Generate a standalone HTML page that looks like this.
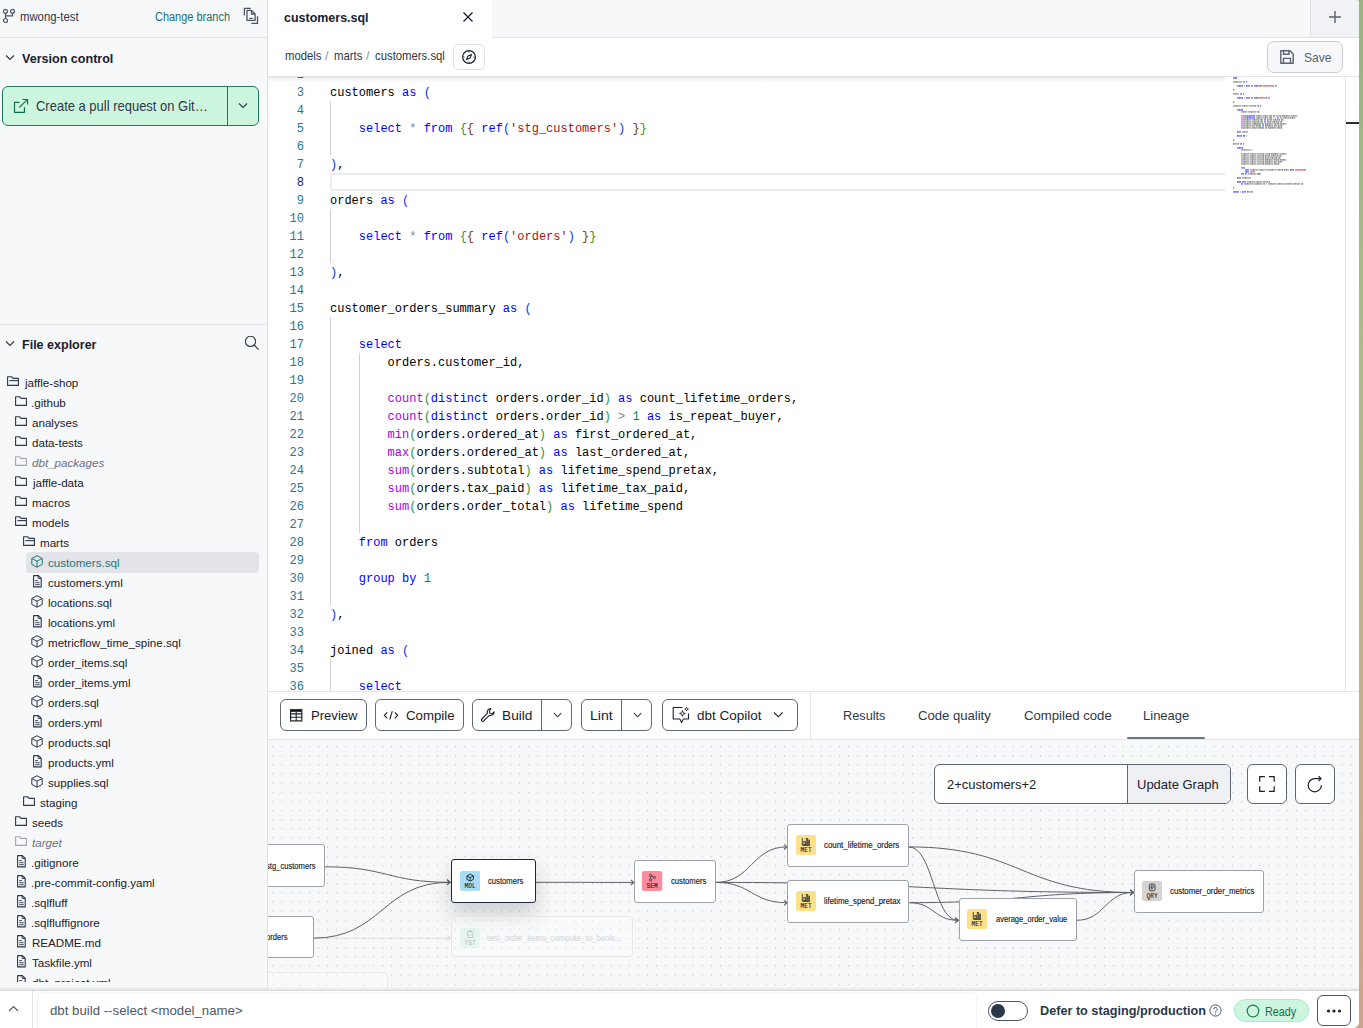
<!DOCTYPE html>
<html><head><meta charset="utf-8"><title>dbt Studio - customers.sql</title>
<style>
html,body{margin:0;padding:0;}
body{width:1363px;height:1028px;overflow:hidden;position:relative;font-family:"Liberation Sans",sans-serif;
 background:linear-gradient(#9bb284,#a9b98c 30%,#c0b090 64%,#caa48e);}
.app{position:absolute;left:0;top:0;width:1359px;height:1028px;background:#fff;overflow:hidden;border-bottom-right-radius:6px;border-top-right-radius:3px;}
.b{position:absolute;}
.t{position:absolute;white-space:nowrap;line-height:1;transform-origin:0 0;}
.code{position:absolute;white-space:pre;font-family:"Liberation Mono",monospace;font-size:12px;line-height:18px;}
</style></head><body><div class="app">
<div class="b" style="left:0px;top:0px;width:267px;height:990px;background:#f7f8fa;"></div><div class="b" style="left:267px;top:0px;width:1px;height:990px;background:#dfe2e7;"></div><svg class="b" style="left:2px;top:8px;" width="14" height="16" viewBox="0 0 14 16" fill="none"><circle cx="3.5" cy="3.35" r="2" stroke="#4a5568" stroke-width="1.2"/><circle cx="10.5" cy="3.35" r="2" stroke="#4a5568" stroke-width="1.2"/><circle cx="3.5" cy="12.5" r="2" stroke="#4a5568" stroke-width="1.2"/><path d="M3.5 5.35V10.5M10.5 5.35V7.9H3.5" stroke="#4a5568" stroke-width="1.2"/></svg><div class="t" style="left:20.40px;top:11.04px;font-size:12px;color:#2d3748;transform:scaleX(0.9444);">mwong-test</div><div class="t" style="left:154.90px;top:11.04px;font-size:12px;color:#17706d;transform:scaleX(0.9142);">Change branch</div><svg class="b" style="left:243px;top:7px;" width="17" height="18" viewBox="0 0 17 18" fill="none"><path d="M1.4 8.6V1.4H7.7M14.5 9.3v7.1H8.4" stroke="#4a5568" stroke-width="1.3"/><path d="M4 3.4h4.5l3.6 3.6v6.4H4z" stroke="#4a5568" stroke-width="1.3" stroke-linejoin="round"/><path d="M8.5 3.4v3.6h3.6M6.3 11.3h3.4" stroke="#4a5568" stroke-width="1.3"/></svg><div class="b" style="left:0px;top:37px;width:267px;height:1px;background:#dfe2e7;"></div><svg class="b" style="left:5px;top:54px;" width="10" height="8" viewBox="0 0 10 8" fill="none"><path d="M1 1.5l4 4 4-4" stroke="#2d3748" stroke-width="1.1"/></svg><div class="t" style="left:21.80px;top:51.94px;font-size:13.3px;color:#1a202c;font-weight:bold;transform:scaleX(0.9438);">Version control</div><div class="b" style="left:2px;top:86px;width:257px;height:40px;background:#cdf6df;border:1px solid #1d7a5c;border-radius:6px;box-sizing:border-box;"></div><div class="b" style="left:227px;top:86px;width:1px;height:40px;background:#1d7a5c;"></div><svg class="b" style="left:12px;top:97px;" width="18" height="17" viewBox="0 0 18 17" fill="none"><path d="M7.4 5.4H2.5V15.3H12.5V10.2" stroke="#0f6e4c" stroke-width="1.2" stroke-linejoin="round"/><path d="M7.3 10.4L15.3 2.6M10.3 2.5H15.5V7.4" stroke="#0f6e4c" stroke-width="1.2"/></svg><div class="t" style="left:36.00px;top:98.71px;font-size:14.4px;color:#2d3748;transform:scaleX(0.9017);">Create a pull request on Git…</div><svg class="b" style="left:238px;top:102px;" width="11" height="8" viewBox="0 0 11 8" fill="none"><path d="M1 1.5l4 4 4-4" stroke="#2d3748" stroke-width="1.1"/></svg><div class="b" style="left:0px;top:324px;width:267px;height:1px;background:#dfe2e7;"></div><svg class="b" style="left:5px;top:340px;" width="10" height="8" viewBox="0 0 10 8" fill="none"><path d="M1 1.5l4 4 4-4" stroke="#2d3748" stroke-width="1.1"/></svg><div class="t" style="left:22.40px;top:337.74px;font-size:13.3px;color:#1a202c;font-weight:bold;transform:scaleX(0.9417);">File explorer</div><svg class="b" style="left:243px;top:336px;" width="17" height="15" viewBox="0 0 17 15" fill="none"><circle cx="7.5" cy="5.4" r="5.1" stroke="#2d3748" stroke-width="1.1"/><path d="M11.1 9L15.6 13.6" stroke="#2d3748" stroke-width="1.1"/></svg><div class="b" style="left:0;top:0;width:267px;height:982px;overflow:hidden;"><svg class="b" style="left:7px;top:375.7px;" width="13" height="11" viewBox="0 0 13 11" fill="none"><path d="M0.6 9.4V0.8h4.2l1.2 1.6h5.4v7z" stroke="#2d3748" stroke-width="1.1" stroke-linejoin="round"/><path d="M2.4 4.6h9.4" stroke="#2d3748" stroke-width="1.1"/></svg><div class="t" style="left:25.00px;top:376.88px;font-size:11.6px;color:#1a202c;">jaffle-shop</div><svg class="b" style="left:15px;top:395.7px;" width="13" height="11" viewBox="0 0 13 11" fill="none"><path d="M0.6 9.4V0.8h4.2l1.2 1.6h5.4v7z" stroke="#2d3748" stroke-width="1.1" stroke-linejoin="round"/></svg><div class="t" style="left:31.00px;top:396.88px;font-size:11.6px;color:#1a202c;">.github</div><svg class="b" style="left:15px;top:415.7px;" width="13" height="11" viewBox="0 0 13 11" fill="none"><path d="M0.6 9.4V0.8h4.2l1.2 1.6h5.4v7z" stroke="#2d3748" stroke-width="1.1" stroke-linejoin="round"/></svg><div class="t" style="left:32.00px;top:416.88px;font-size:11.6px;color:#1a202c;">analyses</div><svg class="b" style="left:15px;top:435.7px;" width="13" height="11" viewBox="0 0 13 11" fill="none"><path d="M0.6 9.4V0.8h4.2l1.2 1.6h5.4v7z" stroke="#2d3748" stroke-width="1.1" stroke-linejoin="round"/></svg><div class="t" style="left:32.00px;top:436.88px;font-size:11.6px;color:#1a202c;">data-tests</div><svg class="b" style="left:15px;top:455.7px;" width="13" height="11" viewBox="0 0 13 11" fill="none"><path d="M0.6 9.4V0.8h4.2l1.2 1.6h5.4v7z" stroke="#a0a7b2" stroke-width="1.1" stroke-linejoin="round"/></svg><div class="t" style="left:32.00px;top:456.88px;font-size:11.6px;color:#6b7280;font-style:italic;">dbt_packages</div><svg class="b" style="left:15px;top:475.7px;" width="13" height="11" viewBox="0 0 13 11" fill="none"><path d="M0.6 9.4V0.8h4.2l1.2 1.6h5.4v7z" stroke="#2d3748" stroke-width="1.1" stroke-linejoin="round"/></svg><div class="t" style="left:33.00px;top:476.88px;font-size:11.6px;color:#1a202c;">jaffle-data</div><svg class="b" style="left:15px;top:495.7px;" width="13" height="11" viewBox="0 0 13 11" fill="none"><path d="M0.6 9.4V0.8h4.2l1.2 1.6h5.4v7z" stroke="#2d3748" stroke-width="1.1" stroke-linejoin="round"/></svg><div class="t" style="left:32.00px;top:496.88px;font-size:11.6px;color:#1a202c;">macros</div><svg class="b" style="left:15px;top:515.7px;" width="13" height="11" viewBox="0 0 13 11" fill="none"><path d="M0.6 9.4V0.8h4.2l1.2 1.6h5.4v7z" stroke="#2d3748" stroke-width="1.1" stroke-linejoin="round"/><path d="M2.4 4.6h9.4" stroke="#2d3748" stroke-width="1.1"/></svg><div class="t" style="left:32.00px;top:516.88px;font-size:11.6px;color:#1a202c;">models</div><svg class="b" style="left:23px;top:535.7px;" width="13" height="11" viewBox="0 0 13 11" fill="none"><path d="M0.6 9.4V0.8h4.2l1.2 1.6h5.4v7z" stroke="#2d3748" stroke-width="1.1" stroke-linejoin="round"/><path d="M2.4 4.6h9.4" stroke="#2d3748" stroke-width="1.1"/></svg><div class="t" style="left:40.00px;top:536.88px;font-size:11.6px;color:#1a202c;">marts</div><div class="b" style="left:26.2px;top:552.0px;width:232.6px;height:20.9px;background:#e2e4e9;border-radius:4px;"></div><svg class="b" style="left:31px;top:554.5px;" width="13" height="13" viewBox="0 0 13 13" fill="none"><path d="M6 0.7l5.2 2.8v5.9L6 12.2 0.8 9.4V3.5z" stroke="#1d7a78" stroke-width="1" stroke-linejoin="round"/><path d="M0.8 3.5L6 6.2l5.2-2.7M6 6.2v6" stroke="#1d7a78" stroke-width="1"/></svg><div class="t" style="left:48.00px;top:556.88px;font-size:11.6px;color:#1d7a78;">customers.sql</div><svg class="b" style="left:32.6px;top:574.8000000000001px;" width="10" height="13" viewBox="0 0 10 13" fill="none"><path d="M0.6 0.6h4.8l2.8 2.9v8.4H0.6z" stroke="#2d3748" stroke-width="1.1" stroke-linejoin="round"/><path d="M5.2 0.6v2.9h3M2.2 5.6h2.8M2.2 7.7h4.6M2.2 9.7h4.6" stroke="#2d3748" stroke-width="0.9"/></svg><div class="t" style="left:48.00px;top:576.88px;font-size:11.6px;color:#1a202c;">customers.yml</div><svg class="b" style="left:31px;top:594.5px;" width="13" height="13" viewBox="0 0 13 13" fill="none"><path d="M6 0.7l5.2 2.8v5.9L6 12.2 0.8 9.4V3.5z" stroke="#2d3748" stroke-width="1" stroke-linejoin="round"/><path d="M0.8 3.5L6 6.2l5.2-2.7M6 6.2v6" stroke="#2d3748" stroke-width="1"/></svg><div class="t" style="left:48.00px;top:596.88px;font-size:11.6px;color:#1a202c;">locations.sql</div><svg class="b" style="left:32.6px;top:614.8000000000001px;" width="10" height="13" viewBox="0 0 10 13" fill="none"><path d="M0.6 0.6h4.8l2.8 2.9v8.4H0.6z" stroke="#2d3748" stroke-width="1.1" stroke-linejoin="round"/><path d="M5.2 0.6v2.9h3M2.2 5.6h2.8M2.2 7.7h4.6M2.2 9.7h4.6" stroke="#2d3748" stroke-width="0.9"/></svg><div class="t" style="left:48.00px;top:616.88px;font-size:11.6px;color:#1a202c;">locations.yml</div><svg class="b" style="left:31px;top:634.5px;" width="13" height="13" viewBox="0 0 13 13" fill="none"><path d="M6 0.7l5.2 2.8v5.9L6 12.2 0.8 9.4V3.5z" stroke="#2d3748" stroke-width="1" stroke-linejoin="round"/><path d="M0.8 3.5L6 6.2l5.2-2.7M6 6.2v6" stroke="#2d3748" stroke-width="1"/></svg><div class="t" style="left:48.00px;top:636.88px;font-size:11.6px;color:#1a202c;">metricflow_time_spine.sql</div><svg class="b" style="left:31px;top:654.5px;" width="13" height="13" viewBox="0 0 13 13" fill="none"><path d="M6 0.7l5.2 2.8v5.9L6 12.2 0.8 9.4V3.5z" stroke="#2d3748" stroke-width="1" stroke-linejoin="round"/><path d="M0.8 3.5L6 6.2l5.2-2.7M6 6.2v6" stroke="#2d3748" stroke-width="1"/></svg><div class="t" style="left:48.00px;top:656.88px;font-size:11.6px;color:#1a202c;">order_items.sql</div><svg class="b" style="left:32.6px;top:674.8000000000001px;" width="10" height="13" viewBox="0 0 10 13" fill="none"><path d="M0.6 0.6h4.8l2.8 2.9v8.4H0.6z" stroke="#2d3748" stroke-width="1.1" stroke-linejoin="round"/><path d="M5.2 0.6v2.9h3M2.2 5.6h2.8M2.2 7.7h4.6M2.2 9.7h4.6" stroke="#2d3748" stroke-width="0.9"/></svg><div class="t" style="left:48.00px;top:676.88px;font-size:11.6px;color:#1a202c;">order_items.yml</div><svg class="b" style="left:31px;top:694.5px;" width="13" height="13" viewBox="0 0 13 13" fill="none"><path d="M6 0.7l5.2 2.8v5.9L6 12.2 0.8 9.4V3.5z" stroke="#2d3748" stroke-width="1" stroke-linejoin="round"/><path d="M0.8 3.5L6 6.2l5.2-2.7M6 6.2v6" stroke="#2d3748" stroke-width="1"/></svg><div class="t" style="left:48.00px;top:696.88px;font-size:11.6px;color:#1a202c;">orders.sql</div><svg class="b" style="left:32.6px;top:714.8000000000001px;" width="10" height="13" viewBox="0 0 10 13" fill="none"><path d="M0.6 0.6h4.8l2.8 2.9v8.4H0.6z" stroke="#2d3748" stroke-width="1.1" stroke-linejoin="round"/><path d="M5.2 0.6v2.9h3M2.2 5.6h2.8M2.2 7.7h4.6M2.2 9.7h4.6" stroke="#2d3748" stroke-width="0.9"/></svg><div class="t" style="left:48.00px;top:716.88px;font-size:11.6px;color:#1a202c;">orders.yml</div><svg class="b" style="left:31px;top:734.5px;" width="13" height="13" viewBox="0 0 13 13" fill="none"><path d="M6 0.7l5.2 2.8v5.9L6 12.2 0.8 9.4V3.5z" stroke="#2d3748" stroke-width="1" stroke-linejoin="round"/><path d="M0.8 3.5L6 6.2l5.2-2.7M6 6.2v6" stroke="#2d3748" stroke-width="1"/></svg><div class="t" style="left:48.00px;top:736.88px;font-size:11.6px;color:#1a202c;">products.sql</div><svg class="b" style="left:32.6px;top:754.8000000000001px;" width="10" height="13" viewBox="0 0 10 13" fill="none"><path d="M0.6 0.6h4.8l2.8 2.9v8.4H0.6z" stroke="#2d3748" stroke-width="1.1" stroke-linejoin="round"/><path d="M5.2 0.6v2.9h3M2.2 5.6h2.8M2.2 7.7h4.6M2.2 9.7h4.6" stroke="#2d3748" stroke-width="0.9"/></svg><div class="t" style="left:48.00px;top:756.88px;font-size:11.6px;color:#1a202c;">products.yml</div><svg class="b" style="left:31px;top:774.5px;" width="13" height="13" viewBox="0 0 13 13" fill="none"><path d="M6 0.7l5.2 2.8v5.9L6 12.2 0.8 9.4V3.5z" stroke="#2d3748" stroke-width="1" stroke-linejoin="round"/><path d="M0.8 3.5L6 6.2l5.2-2.7M6 6.2v6" stroke="#2d3748" stroke-width="1"/></svg><div class="t" style="left:48.00px;top:776.88px;font-size:11.6px;color:#1a202c;">supplies.sql</div><svg class="b" style="left:23px;top:795.7px;" width="13" height="11" viewBox="0 0 13 11" fill="none"><path d="M0.6 9.4V0.8h4.2l1.2 1.6h5.4v7z" stroke="#2d3748" stroke-width="1.1" stroke-linejoin="round"/></svg><div class="t" style="left:40.00px;top:796.88px;font-size:11.6px;color:#1a202c;">staging</div><svg class="b" style="left:15px;top:815.7px;" width="13" height="11" viewBox="0 0 13 11" fill="none"><path d="M0.6 9.4V0.8h4.2l1.2 1.6h5.4v7z" stroke="#2d3748" stroke-width="1.1" stroke-linejoin="round"/></svg><div class="t" style="left:32.00px;top:816.88px;font-size:11.6px;color:#1a202c;">seeds</div><svg class="b" style="left:15px;top:835.7px;" width="13" height="11" viewBox="0 0 13 11" fill="none"><path d="M0.6 9.4V0.8h4.2l1.2 1.6h5.4v7z" stroke="#a0a7b2" stroke-width="1.1" stroke-linejoin="round"/></svg><div class="t" style="left:32.00px;top:836.88px;font-size:11.6px;color:#6b7280;font-style:italic;">target</div><svg class="b" style="left:16.6px;top:854.8000000000001px;" width="10" height="13" viewBox="0 0 10 13" fill="none"><path d="M0.6 0.6h4.8l2.8 2.9v8.4H0.6z" stroke="#2d3748" stroke-width="1.1" stroke-linejoin="round"/><path d="M5.2 0.6v2.9h3M2.2 5.6h2.8M2.2 7.7h4.6M2.2 9.7h4.6" stroke="#2d3748" stroke-width="0.9"/></svg><div class="t" style="left:31.00px;top:856.88px;font-size:11.6px;color:#1a202c;">.gitignore</div><svg class="b" style="left:16.6px;top:874.8000000000001px;" width="10" height="13" viewBox="0 0 10 13" fill="none"><path d="M0.6 0.6h4.8l2.8 2.9v8.4H0.6z" stroke="#2d3748" stroke-width="1.1" stroke-linejoin="round"/><path d="M5.2 0.6v2.9h3M2.2 5.6h2.8M2.2 7.7h4.6M2.2 9.7h4.6" stroke="#2d3748" stroke-width="0.9"/></svg><div class="t" style="left:31.00px;top:876.88px;font-size:11.6px;color:#1a202c;">.pre-commit-config.yaml</div><svg class="b" style="left:16.6px;top:894.8000000000001px;" width="10" height="13" viewBox="0 0 10 13" fill="none"><path d="M0.6 0.6h4.8l2.8 2.9v8.4H0.6z" stroke="#2d3748" stroke-width="1.1" stroke-linejoin="round"/><path d="M5.2 0.6v2.9h3M2.2 5.6h2.8M2.2 7.7h4.6M2.2 9.7h4.6" stroke="#2d3748" stroke-width="0.9"/></svg><div class="t" style="left:31.00px;top:896.88px;font-size:11.6px;color:#1a202c;">.sqlfluff</div><svg class="b" style="left:16.6px;top:914.8000000000001px;" width="10" height="13" viewBox="0 0 10 13" fill="none"><path d="M0.6 0.6h4.8l2.8 2.9v8.4H0.6z" stroke="#2d3748" stroke-width="1.1" stroke-linejoin="round"/><path d="M5.2 0.6v2.9h3M2.2 5.6h2.8M2.2 7.7h4.6M2.2 9.7h4.6" stroke="#2d3748" stroke-width="0.9"/></svg><div class="t" style="left:31.00px;top:916.88px;font-size:11.6px;color:#1a202c;">.sqlfluffignore</div><svg class="b" style="left:16.6px;top:934.8000000000001px;" width="10" height="13" viewBox="0 0 10 13" fill="none"><path d="M0.6 0.6h4.8l2.8 2.9v8.4H0.6z" stroke="#2d3748" stroke-width="1.1" stroke-linejoin="round"/><path d="M5.2 0.6v2.9h3M2.2 5.6h2.8M2.2 7.7h4.6M2.2 9.7h4.6" stroke="#2d3748" stroke-width="0.9"/></svg><div class="t" style="left:32.00px;top:936.88px;font-size:11.6px;color:#1a202c;">README.md</div><svg class="b" style="left:16.6px;top:954.8000000000001px;" width="10" height="13" viewBox="0 0 10 13" fill="none"><path d="M0.6 0.6h4.8l2.8 2.9v8.4H0.6z" stroke="#2d3748" stroke-width="1.1" stroke-linejoin="round"/><path d="M5.2 0.6v2.9h3M2.2 5.6h2.8M2.2 7.7h4.6M2.2 9.7h4.6" stroke="#2d3748" stroke-width="0.9"/></svg><div class="t" style="left:32.00px;top:956.88px;font-size:11.6px;color:#1a202c;">Taskfile.yml</div><svg class="b" style="left:16.6px;top:974.8000000000001px;" width="10" height="13" viewBox="0 0 10 13" fill="none"><path d="M0.6 0.6h4.8l2.8 2.9v8.4H0.6z" stroke="#2d3748" stroke-width="1.1" stroke-linejoin="round"/><path d="M5.2 0.6v2.9h3M2.2 5.6h2.8M2.2 7.7h4.6M2.2 9.7h4.6" stroke="#2d3748" stroke-width="0.9"/></svg><div class="t" style="left:32.00px;top:976.88px;font-size:11.6px;color:#1a202c;">dbt_project.yml</div></div><div class="b" style="left:0px;top:989px;width:1359px;height:39px;background:#fff;"></div><svg class="b" style="left:8px;top:1005px;" width="11" height="8" viewBox="0 0 11 8" fill="none"><path d="M1 6l4.5-4.5L10 6" stroke="#4a5568" stroke-width="1.1"/></svg><div class="b" style="left:32px;top:990px;width:1px;height:38px;background:#e2e5ea;"></div><div class="t" style="left:49.50px;top:1005.16px;font-size:12.8px;color:#4f5968;transform:scaleX(1.0339);">dbt build --select &lt;model_name&gt;</div><div class="b" style="left:36.5px;top:992px;width:940px;height:40px;border:1px solid #f2f3f5;border-radius:5px;box-sizing:border-box;"></div><div class="b" style="left:988px;top:1001px;width:39.5px;height:19.5px;border:1.2px solid #4a5568;border-radius:10px;box-sizing:border-box;background:#fff;"></div><div class="b" style="left:991px;top:1003.7px;width:14px;height:14px;background:#2d3748;border-radius:50%;"></div><div class="t" style="left:1039.90px;top:1004.40px;font-size:13.7px;color:#2d3748;font-weight:bold;transform:scaleX(0.9252);">Defer to staging/production</div><svg class="b" style="left:1209px;top:1004px;" width="13" height="13" viewBox="0 0 13 13" fill="none"><circle cx="6.5" cy="6.5" r="5.6" stroke="#4a5568" stroke-width="1"/><path d="M4.7 5.2a1.8 1.8 0 1 1 2.6 1.6c-.6.3-.8.6-.8 1.2v.4" stroke="#4a5568" stroke-width="1"/><circle cx="6.5" cy="9.9" r=".6" fill="#4a5568"/></svg><div class="b" style="left:1234.3px;top:999.2px;width:74.7px;height:23.1px;background:#ccf6de;border:1px solid #a3ecc4;border-radius:12px;box-sizing:border-box;"></div><svg class="b" style="left:1246px;top:1004px;" width="14" height="14" viewBox="0 0 14 14" fill="none"><circle cx="7" cy="7" r="5.8" stroke="#1d7a5c" stroke-width="1.2"/></svg><div class="t" style="left:1264.77px;top:1004.99px;font-size:13px;color:#1d6b50;transform:scaleX(0.8307);">Ready</div><div class="b" style="left:1317.4px;top:995.4px;width:33.6px;height:31px;border:1.3px solid #4a5568;border-radius:6px;box-sizing:border-box;background:#fff;"></div><svg class="b" style="left:1325px;top:1008px;" width="18" height="6" viewBox="0 0 18 6" fill="none"><circle cx="3.5" cy="3" r="1.6" fill="#1a202c"/><circle cx="9" cy="3" r="1.6" fill="#1a202c"/><circle cx="14.5" cy="3" r="1.6" fill="#1a202c"/></svg><div class="b" style="left:268px;top:0px;width:1091px;height:37px;background:#f7f8fa;"></div><div class="b" style="left:268px;top:37px;width:1091px;height:1px;background:#dfe2e7;"></div><div class="b" style="left:1310px;top:0px;width:49px;height:37px;background:#f1f2f5;border-left:1px solid #dfe2e7;"></div><svg class="b" style="left:1328px;top:10px;" width="14" height="14" viewBox="0 0 14 14" fill="none"><path d="M7 1v12M1 7h12" stroke="#5a6270" stroke-width="1.4"/></svg><div class="b" style="left:268px;top:0px;width:224px;height:38px;background:#fff;"></div><div class="t" style="left:284.20px;top:10.74px;font-size:13.3px;color:#1a202c;font-weight:bold;transform:scaleX(0.9378);">customers.sql</div><svg class="b" style="left:462px;top:11px;" width="12" height="12" viewBox="0 0 12 12" fill="none"><path d="M1.5 1.5l9 9M10.5 1.5l-9 9" stroke="#1a202c" stroke-width="1.3"/></svg><div class="b" style="left:268px;top:38px;width:1091px;height:38px;background:#fff;"></div><div class="b" style="left:268px;top:76px;width:1091px;height:1px;background:#e2e5ea;"></div><div class="t" style="left:284.50px;top:49.50px;font-size:12.4px;color:#2d3748;transform:scaleX(0.9107);">models</div><div class="t" style="left:324.90px;top:50.30px;font-size:12.4px;color:#8a94a3;">/</div><div class="t" style="left:333.80px;top:49.50px;font-size:12.4px;color:#2d3748;transform:scaleX(0.9161);">marts</div><div class="t" style="left:366.00px;top:50.30px;font-size:12.4px;color:#8a94a3;">/</div><div class="t" style="left:375.10px;top:49.50px;font-size:12.4px;color:#2d3748;transform:scaleX(0.9144);">customers.sql</div><div class="b" style="left:453.2px;top:44.3px;width:31.5px;height:25.4px;border:1px solid #dfe2e7;border-radius:5px;box-sizing:border-box;background:#fff;"></div><svg class="b" style="left:461px;top:49px;" width="16" height="16" viewBox="0 0 16 16" fill="none"><circle cx="8" cy="8" r="6.4" stroke="#1a202c" stroke-width="1.2"/><path d="M8 2v1.6M8 12.4V14M2 8h1.6M12.4 8H14" stroke="#1a202c" stroke-width="1" opacity="0.7"/><path d="M10.6 5.4L9 9 5.4 10.6 7 7z" stroke="#1a202c" stroke-width="1.1" stroke-linejoin="round"/></svg><div class="b" style="left:1267.2px;top:41.1px;width:75.6px;height:31.8px;background:#f7f8fa;border:1px solid #c9ced6;border-radius:7px;box-sizing:border-box;"></div><svg class="b" style="left:1279px;top:49px;" width="16" height="16" viewBox="0 0 16 16" fill="none"><path d="M1.8 1.8h9.2l3.2 3.2v9.2H1.8z" stroke="#5a6270" stroke-width="1.4" stroke-linejoin="round"/><path d="M4.5 1.8v3.4h5.5V1.8M4.5 14.2V9.4h7v4.8" stroke="#5a6270" stroke-width="1.4"/></svg><div class="t" style="left:1303.50px;top:50.75px;font-size:13.4px;color:#5a6270;transform:scaleX(0.9044);">Save</div><div class="b" style="left:268px;top:77px;width:1091px;height:614px;overflow:hidden;"><div class="b" style="left:-268px;top:-77px;width:1359px;height:700px;"><div class="b" style="left:330.3px;top:173.3px;width:930px;height:17.8px;border:2px solid #ececec;box-sizing:border-box;"></div><div class="b" style="left:1225px;top:77px;width:120px;height:620px;background:#fff;"></div><div class="b" style="left:330.0px;top:101.1px;width:1px;height:54.0px;background:#d3d3d3;"></div><div class="b" style="left:330.0px;top:209.1px;width:1px;height:54.00000000000003px;background:#d3d3d3;"></div><div class="b" style="left:330.0px;top:317.1px;width:1px;height:288.0px;background:#d3d3d3;"></div><div class="b" style="left:358.8px;top:353.1px;width:1px;height:180.0px;background:#d3d3d3;"></div><div class="b" style="left:330.0px;top:659.1px;width:1px;height:54.0px;background:#d3d3d3;"></div><div class="code" style="left:262px;top:48.10px;width:42px;text-align:right;"><span style="color:#237893">1</span><br><span style="color:#237893">2</span><br><span style="color:#237893">3</span><br><span style="color:#237893">4</span><br><span style="color:#237893">5</span><br><span style="color:#237893">6</span><br><span style="color:#237893">7</span><br><span style="color:#0b216f">8</span><br><span style="color:#237893">9</span><br><span style="color:#237893">10</span><br><span style="color:#237893">11</span><br><span style="color:#237893">12</span><br><span style="color:#237893">13</span><br><span style="color:#237893">14</span><br><span style="color:#237893">15</span><br><span style="color:#237893">16</span><br><span style="color:#237893">17</span><br><span style="color:#237893">18</span><br><span style="color:#237893">19</span><br><span style="color:#237893">20</span><br><span style="color:#237893">21</span><br><span style="color:#237893">22</span><br><span style="color:#237893">23</span><br><span style="color:#237893">24</span><br><span style="color:#237893">25</span><br><span style="color:#237893">26</span><br><span style="color:#237893">27</span><br><span style="color:#237893">28</span><br><span style="color:#237893">29</span><br><span style="color:#237893">30</span><br><span style="color:#237893">31</span><br><span style="color:#237893">32</span><br><span style="color:#237893">33</span><br><span style="color:#237893">34</span><br><span style="color:#237893">35</span><br><span style="color:#237893">36</span><br><span style="color:#237893">37</span></div><div class="code" style="left:330px;top:48.10px;"><span style="color:#0000ff">with</span>

<span style="color:#000000">customers</span> <span style="color:#0000ff">as</span> <span style="color:#0431fa">(</span>

    <span style="color:#0000ff">select</span> <span style="color:#778899">*</span> <span style="color:#0000ff">from</span> <span style="color:#319331">{</span><span style="color:#7b3814">{</span> <span style="color:#0000ff">ref</span><span style="color:#0431fa">(</span><span style="color:#a31515">'stg_customers'</span><span style="color:#0431fa">)</span> <span style="color:#7b3814">}</span><span style="color:#319331">}</span>

<span style="color:#0431fa">)</span><span style="color:#000000">,</span>

<span style="color:#000000">orders</span> <span style="color:#0000ff">as</span> <span style="color:#0431fa">(</span>

    <span style="color:#0000ff">select</span> <span style="color:#778899">*</span> <span style="color:#0000ff">from</span> <span style="color:#319331">{</span><span style="color:#7b3814">{</span> <span style="color:#0000ff">ref</span><span style="color:#0431fa">(</span><span style="color:#a31515">'orders'</span><span style="color:#0431fa">)</span> <span style="color:#7b3814">}</span><span style="color:#319331">}</span>

<span style="color:#0431fa">)</span><span style="color:#000000">,</span>

<span style="color:#000000">customer_orders_summary</span> <span style="color:#0000ff">as</span> <span style="color:#0431fa">(</span>

    <span style="color:#0000ff">select</span>
        <span style="color:#000000">orders</span><span style="color:#000000">.</span><span style="color:#000000">customer_id</span><span style="color:#000000">,</span>

        <span style="color:#af00db">count</span><span style="color:#319331">(</span><span style="color:#0000ff">distinct</span> <span style="color:#000000">orders</span><span style="color:#000000">.</span><span style="color:#000000">order_id</span><span style="color:#319331">)</span> <span style="color:#0000ff">as</span> <span style="color:#000000">count_lifetime_orders</span><span style="color:#000000">,</span>
        <span style="color:#af00db">count</span><span style="color:#319331">(</span><span style="color:#0000ff">distinct</span> <span style="color:#000000">orders</span><span style="color:#000000">.</span><span style="color:#000000">order_id</span><span style="color:#319331">)</span> <span style="color:#778899">&gt;</span> <span style="color:#098658">1</span> <span style="color:#0000ff">as</span> <span style="color:#000000">is_repeat_buyer</span><span style="color:#000000">,</span>
        <span style="color:#af00db">min</span><span style="color:#319331">(</span><span style="color:#000000">orders</span><span style="color:#000000">.</span><span style="color:#000000">ordered_at</span><span style="color:#319331">)</span> <span style="color:#0000ff">as</span> <span style="color:#000000">first_ordered_at</span><span style="color:#000000">,</span>
        <span style="color:#af00db">max</span><span style="color:#319331">(</span><span style="color:#000000">orders</span><span style="color:#000000">.</span><span style="color:#000000">ordered_at</span><span style="color:#319331">)</span> <span style="color:#0000ff">as</span> <span style="color:#000000">last_ordered_at</span><span style="color:#000000">,</span>
        <span style="color:#af00db">sum</span><span style="color:#319331">(</span><span style="color:#000000">orders</span><span style="color:#000000">.</span><span style="color:#000000">subtotal</span><span style="color:#319331">)</span> <span style="color:#0000ff">as</span> <span style="color:#000000">lifetime_spend_pretax</span><span style="color:#000000">,</span>
        <span style="color:#af00db">sum</span><span style="color:#319331">(</span><span style="color:#000000">orders</span><span style="color:#000000">.</span><span style="color:#000000">tax_paid</span><span style="color:#319331">)</span> <span style="color:#0000ff">as</span> <span style="color:#000000">lifetime_tax_paid</span><span style="color:#000000">,</span>
        <span style="color:#af00db">sum</span><span style="color:#319331">(</span><span style="color:#000000">orders</span><span style="color:#000000">.</span><span style="color:#000000">order_total</span><span style="color:#319331">)</span> <span style="color:#0000ff">as</span> <span style="color:#000000">lifetime_spend</span>

    <span style="color:#0000ff">from</span> <span style="color:#000000">orders</span>

    <span style="color:#0000ff">group</span> <span style="color:#0000ff">by</span> <span style="color:#098658">1</span>

<span style="color:#0431fa">)</span><span style="color:#000000">,</span>

<span style="color:#000000">joined</span> <span style="color:#0000ff">as</span> <span style="color:#0431fa">(</span>

    <span style="color:#0000ff">select</span>
        <span style="color:#000000">customers</span><span style="color:#000000">.</span><span style="color:#778899">*</span><span style="color:#000000">,</span></div></div></div><div class="b" style="left:268px;top:77px;width:957px;height:5px;background:linear-gradient(rgba(0,0,0,0.09),rgba(0,0,0,0));"></div><svg class="b" style="left:1233px;top:76.7px;" width="110" height="120" viewBox="0 0 110 120" fill="none"><rect x="0" y="0.2" width="1" height="1.4" fill="#0000ff" opacity="0.55"/><rect x="1" y="0.2" width="1" height="1.4" fill="#0000ff" opacity="0.55"/><rect x="2" y="0.2" width="1" height="1.4" fill="#0000ff" opacity="0.7"/><rect x="3" y="0.2" width="1" height="1.4" fill="#0000ff" opacity="0.7"/><rect x="0" y="4.2" width="1" height="1.4" fill="#222" opacity="0.42"/><rect x="1" y="4.2" width="1" height="1.4" fill="#222" opacity="0.42"/><rect x="2" y="4.2" width="1" height="1.4" fill="#222" opacity="0.42"/><rect x="3" y="4.2" width="1" height="1.4" fill="#222" opacity="0.62"/><rect x="4" y="4.2" width="1" height="1.4" fill="#222" opacity="0.42"/><rect x="5" y="4.2" width="1" height="1.4" fill="#222" opacity="0.42"/><rect x="6" y="4.2" width="1" height="1.4" fill="#222" opacity="0.42"/><rect x="7" y="4.2" width="1" height="1.4" fill="#222" opacity="0.42"/><rect x="8" y="4.2" width="1" height="1.4" fill="#222" opacity="0.42"/><rect x="10" y="4.2" width="1" height="1.4" fill="#0000ff" opacity="0.55"/><rect x="11" y="4.2" width="1" height="1.4" fill="#0000ff" opacity="0.55"/><rect x="13" y="4.2" width="1" height="1.4" fill="#0431fa" opacity="0.7"/><rect x="4" y="8.2" width="1" height="1.4" fill="#0000ff" opacity="0.55"/><rect x="5" y="8.2" width="1" height="1.4" fill="#0000ff" opacity="0.55"/><rect x="6" y="8.2" width="1" height="1.4" fill="#0000ff" opacity="0.7"/><rect x="7" y="8.2" width="1" height="1.4" fill="#0000ff" opacity="0.55"/><rect x="8" y="8.2" width="1" height="1.4" fill="#0000ff" opacity="0.55"/><rect x="9" y="8.2" width="1" height="1.4" fill="#0000ff" opacity="0.7"/><rect x="11" y="8.2" width="1" height="1.4" fill="#778899" opacity="0.55"/><rect x="13" y="8.2" width="1" height="1.4" fill="#0000ff" opacity="0.7"/><rect x="14" y="8.2" width="1" height="1.4" fill="#0000ff" opacity="0.55"/><rect x="15" y="8.2" width="1" height="1.4" fill="#0000ff" opacity="0.55"/><rect x="16" y="8.2" width="1" height="1.4" fill="#0000ff" opacity="0.55"/><rect x="18" y="8.2" width="1" height="1.4" fill="#319331" opacity="0.7"/><rect x="19" y="8.2" width="1" height="1.4" fill="#7b3814" opacity="0.7"/><rect x="21" y="8.2" width="1" height="1.4" fill="#0000ff" opacity="0.55"/><rect x="22" y="8.2" width="1" height="1.4" fill="#0000ff" opacity="0.55"/><rect x="23" y="8.2" width="1" height="1.4" fill="#0000ff" opacity="0.7"/><rect x="24" y="8.2" width="1" height="1.4" fill="#0431fa" opacity="0.7"/><rect x="25" y="8.2" width="1" height="1.4" fill="#a31515" opacity="0.55"/><rect x="26" y="8.2" width="1" height="1.4" fill="#a31515" opacity="0.55"/><rect x="27" y="8.2" width="1" height="1.4" fill="#a31515" opacity="0.7"/><rect x="28" y="8.2" width="1" height="1.4" fill="#a31515" opacity="0.7"/><rect x="29" y="8.2" width="1" height="1.4" fill="#a31515" opacity="0.2"/><rect x="30" y="8.2" width="1" height="1.4" fill="#a31515" opacity="0.55"/><rect x="31" y="8.2" width="1" height="1.4" fill="#a31515" opacity="0.55"/><rect x="32" y="8.2" width="1" height="1.4" fill="#a31515" opacity="0.55"/><rect x="33" y="8.2" width="1" height="1.4" fill="#a31515" opacity="0.7"/><rect x="34" y="8.2" width="1" height="1.4" fill="#a31515" opacity="0.55"/><rect x="35" y="8.2" width="1" height="1.4" fill="#a31515" opacity="0.55"/><rect x="36" y="8.2" width="1" height="1.4" fill="#a31515" opacity="0.55"/><rect x="37" y="8.2" width="1" height="1.4" fill="#a31515" opacity="0.55"/><rect x="38" y="8.2" width="1" height="1.4" fill="#a31515" opacity="0.55"/><rect x="39" y="8.2" width="1" height="1.4" fill="#a31515" opacity="0.55"/><rect x="40" y="8.2" width="1" height="1.4" fill="#0431fa" opacity="0.7"/><rect x="42" y="8.2" width="1" height="1.4" fill="#7b3814" opacity="0.7"/><rect x="43" y="8.2" width="1" height="1.4" fill="#319331" opacity="0.7"/><rect x="0" y="12.2" width="1" height="1.4" fill="#0431fa" opacity="0.7"/><rect x="1" y="12.2" width="1" height="1.4" fill="#222" opacity="0.2"/><rect x="0" y="16.2" width="1" height="1.4" fill="#222" opacity="0.42"/><rect x="1" y="16.2" width="1" height="1.4" fill="#222" opacity="0.42"/><rect x="2" y="16.2" width="1" height="1.4" fill="#222" opacity="0.62"/><rect x="3" y="16.2" width="1" height="1.4" fill="#222" opacity="0.42"/><rect x="4" y="16.2" width="1" height="1.4" fill="#222" opacity="0.42"/><rect x="5" y="16.2" width="1" height="1.4" fill="#222" opacity="0.42"/><rect x="7" y="16.2" width="1" height="1.4" fill="#0000ff" opacity="0.55"/><rect x="8" y="16.2" width="1" height="1.4" fill="#0000ff" opacity="0.55"/><rect x="10" y="16.2" width="1" height="1.4" fill="#0431fa" opacity="0.7"/><rect x="4" y="20.2" width="1" height="1.4" fill="#0000ff" opacity="0.55"/><rect x="5" y="20.2" width="1" height="1.4" fill="#0000ff" opacity="0.55"/><rect x="6" y="20.2" width="1" height="1.4" fill="#0000ff" opacity="0.7"/><rect x="7" y="20.2" width="1" height="1.4" fill="#0000ff" opacity="0.55"/><rect x="8" y="20.2" width="1" height="1.4" fill="#0000ff" opacity="0.55"/><rect x="9" y="20.2" width="1" height="1.4" fill="#0000ff" opacity="0.7"/><rect x="11" y="20.2" width="1" height="1.4" fill="#778899" opacity="0.55"/><rect x="13" y="20.2" width="1" height="1.4" fill="#0000ff" opacity="0.7"/><rect x="14" y="20.2" width="1" height="1.4" fill="#0000ff" opacity="0.55"/><rect x="15" y="20.2" width="1" height="1.4" fill="#0000ff" opacity="0.55"/><rect x="16" y="20.2" width="1" height="1.4" fill="#0000ff" opacity="0.55"/><rect x="18" y="20.2" width="1" height="1.4" fill="#319331" opacity="0.7"/><rect x="19" y="20.2" width="1" height="1.4" fill="#7b3814" opacity="0.7"/><rect x="21" y="20.2" width="1" height="1.4" fill="#0000ff" opacity="0.55"/><rect x="22" y="20.2" width="1" height="1.4" fill="#0000ff" opacity="0.55"/><rect x="23" y="20.2" width="1" height="1.4" fill="#0000ff" opacity="0.7"/><rect x="24" y="20.2" width="1" height="1.4" fill="#0431fa" opacity="0.7"/><rect x="25" y="20.2" width="1" height="1.4" fill="#a31515" opacity="0.55"/><rect x="26" y="20.2" width="1" height="1.4" fill="#a31515" opacity="0.55"/><rect x="27" y="20.2" width="1" height="1.4" fill="#a31515" opacity="0.55"/><rect x="28" y="20.2" width="1" height="1.4" fill="#a31515" opacity="0.7"/><rect x="29" y="20.2" width="1" height="1.4" fill="#a31515" opacity="0.55"/><rect x="30" y="20.2" width="1" height="1.4" fill="#a31515" opacity="0.55"/><rect x="31" y="20.2" width="1" height="1.4" fill="#a31515" opacity="0.55"/><rect x="32" y="20.2" width="1" height="1.4" fill="#a31515" opacity="0.55"/><rect x="33" y="20.2" width="1" height="1.4" fill="#0431fa" opacity="0.7"/><rect x="35" y="20.2" width="1" height="1.4" fill="#7b3814" opacity="0.7"/><rect x="36" y="20.2" width="1" height="1.4" fill="#319331" opacity="0.7"/><rect x="0" y="24.2" width="1" height="1.4" fill="#0431fa" opacity="0.7"/><rect x="1" y="24.2" width="1" height="1.4" fill="#222" opacity="0.2"/><rect x="0" y="28.2" width="1" height="1.4" fill="#222" opacity="0.42"/><rect x="1" y="28.2" width="1" height="1.4" fill="#222" opacity="0.42"/><rect x="2" y="28.2" width="1" height="1.4" fill="#222" opacity="0.42"/><rect x="3" y="28.2" width="1" height="1.4" fill="#222" opacity="0.62"/><rect x="4" y="28.2" width="1" height="1.4" fill="#222" opacity="0.42"/><rect x="5" y="28.2" width="1" height="1.4" fill="#222" opacity="0.42"/><rect x="6" y="28.2" width="1" height="1.4" fill="#222" opacity="0.42"/><rect x="7" y="28.2" width="1" height="1.4" fill="#222" opacity="0.42"/><rect x="8" y="28.2" width="1" height="1.4" fill="#222" opacity="0.2"/><rect x="9" y="28.2" width="1" height="1.4" fill="#222" opacity="0.42"/><rect x="10" y="28.2" width="1" height="1.4" fill="#222" opacity="0.42"/><rect x="11" y="28.2" width="1" height="1.4" fill="#222" opacity="0.62"/><rect x="12" y="28.2" width="1" height="1.4" fill="#222" opacity="0.42"/><rect x="13" y="28.2" width="1" height="1.4" fill="#222" opacity="0.42"/><rect x="14" y="28.2" width="1" height="1.4" fill="#222" opacity="0.42"/><rect x="15" y="28.2" width="1" height="1.4" fill="#222" opacity="0.2"/><rect x="16" y="28.2" width="1" height="1.4" fill="#222" opacity="0.42"/><rect x="17" y="28.2" width="1" height="1.4" fill="#222" opacity="0.42"/><rect x="18" y="28.2" width="1" height="1.4" fill="#222" opacity="0.42"/><rect x="19" y="28.2" width="1" height="1.4" fill="#222" opacity="0.42"/><rect x="20" y="28.2" width="1" height="1.4" fill="#222" opacity="0.42"/><rect x="21" y="28.2" width="1" height="1.4" fill="#222" opacity="0.42"/><rect x="22" y="28.2" width="1" height="1.4" fill="#222" opacity="0.62"/><rect x="24" y="28.2" width="1" height="1.4" fill="#0000ff" opacity="0.55"/><rect x="25" y="28.2" width="1" height="1.4" fill="#0000ff" opacity="0.55"/><rect x="27" y="28.2" width="1" height="1.4" fill="#0431fa" opacity="0.7"/><rect x="4" y="32.2" width="1" height="1.4" fill="#0000ff" opacity="0.55"/><rect x="5" y="32.2" width="1" height="1.4" fill="#0000ff" opacity="0.55"/><rect x="6" y="32.2" width="1" height="1.4" fill="#0000ff" opacity="0.7"/><rect x="7" y="32.2" width="1" height="1.4" fill="#0000ff" opacity="0.55"/><rect x="8" y="32.2" width="1" height="1.4" fill="#0000ff" opacity="0.55"/><rect x="9" y="32.2" width="1" height="1.4" fill="#0000ff" opacity="0.7"/><rect x="8" y="34.2" width="1" height="1.4" fill="#222" opacity="0.42"/><rect x="9" y="34.2" width="1" height="1.4" fill="#222" opacity="0.42"/><rect x="10" y="34.2" width="1" height="1.4" fill="#222" opacity="0.62"/><rect x="11" y="34.2" width="1" height="1.4" fill="#222" opacity="0.42"/><rect x="12" y="34.2" width="1" height="1.4" fill="#222" opacity="0.42"/><rect x="13" y="34.2" width="1" height="1.4" fill="#222" opacity="0.42"/><rect x="14" y="34.2" width="1" height="1.4" fill="#222" opacity="0.2"/><rect x="15" y="34.2" width="1" height="1.4" fill="#222" opacity="0.42"/><rect x="16" y="34.2" width="1" height="1.4" fill="#222" opacity="0.42"/><rect x="17" y="34.2" width="1" height="1.4" fill="#222" opacity="0.42"/><rect x="18" y="34.2" width="1" height="1.4" fill="#222" opacity="0.62"/><rect x="19" y="34.2" width="1" height="1.4" fill="#222" opacity="0.42"/><rect x="20" y="34.2" width="1" height="1.4" fill="#222" opacity="0.42"/><rect x="21" y="34.2" width="1" height="1.4" fill="#222" opacity="0.42"/><rect x="22" y="34.2" width="1" height="1.4" fill="#222" opacity="0.42"/><rect x="23" y="34.2" width="1" height="1.4" fill="#222" opacity="0.2"/><rect x="24" y="34.2" width="1" height="1.4" fill="#222" opacity="0.42"/><rect x="25" y="34.2" width="1" height="1.4" fill="#222" opacity="0.62"/><rect x="26" y="34.2" width="1" height="1.4" fill="#222" opacity="0.2"/><rect x="8" y="38.2" width="1" height="1.4" fill="#af00db" opacity="0.55"/><rect x="9" y="38.2" width="1" height="1.4" fill="#af00db" opacity="0.55"/><rect x="10" y="38.2" width="1" height="1.4" fill="#af00db" opacity="0.55"/><rect x="11" y="38.2" width="1" height="1.4" fill="#af00db" opacity="0.55"/><rect x="12" y="38.2" width="1" height="1.4" fill="#af00db" opacity="0.7"/><rect x="13" y="38.2" width="1" height="1.4" fill="#319331" opacity="0.7"/><rect x="14" y="38.2" width="1" height="1.4" fill="#0000ff" opacity="0.7"/><rect x="15" y="38.2" width="1" height="1.4" fill="#0000ff" opacity="0.55"/><rect x="16" y="38.2" width="1" height="1.4" fill="#0000ff" opacity="0.55"/><rect x="17" y="38.2" width="1" height="1.4" fill="#0000ff" opacity="0.7"/><rect x="18" y="38.2" width="1" height="1.4" fill="#0000ff" opacity="0.55"/><rect x="19" y="38.2" width="1" height="1.4" fill="#0000ff" opacity="0.55"/><rect x="20" y="38.2" width="1" height="1.4" fill="#0000ff" opacity="0.55"/><rect x="21" y="38.2" width="1" height="1.4" fill="#0000ff" opacity="0.7"/><rect x="23" y="38.2" width="1" height="1.4" fill="#222" opacity="0.42"/><rect x="24" y="38.2" width="1" height="1.4" fill="#222" opacity="0.42"/><rect x="25" y="38.2" width="1" height="1.4" fill="#222" opacity="0.62"/><rect x="26" y="38.2" width="1" height="1.4" fill="#222" opacity="0.42"/><rect x="27" y="38.2" width="1" height="1.4" fill="#222" opacity="0.42"/><rect x="28" y="38.2" width="1" height="1.4" fill="#222" opacity="0.42"/><rect x="29" y="38.2" width="1" height="1.4" fill="#222" opacity="0.2"/><rect x="30" y="38.2" width="1" height="1.4" fill="#222" opacity="0.42"/><rect x="31" y="38.2" width="1" height="1.4" fill="#222" opacity="0.42"/><rect x="32" y="38.2" width="1" height="1.4" fill="#222" opacity="0.62"/><rect x="33" y="38.2" width="1" height="1.4" fill="#222" opacity="0.42"/><rect x="34" y="38.2" width="1" height="1.4" fill="#222" opacity="0.42"/><rect x="35" y="38.2" width="1" height="1.4" fill="#222" opacity="0.2"/><rect x="36" y="38.2" width="1" height="1.4" fill="#222" opacity="0.42"/><rect x="37" y="38.2" width="1" height="1.4" fill="#222" opacity="0.62"/><rect x="38" y="38.2" width="1" height="1.4" fill="#319331" opacity="0.7"/><rect x="40" y="38.2" width="1" height="1.4" fill="#0000ff" opacity="0.55"/><rect x="41" y="38.2" width="1" height="1.4" fill="#0000ff" opacity="0.55"/><rect x="43" y="38.2" width="1" height="1.4" fill="#222" opacity="0.42"/><rect x="44" y="38.2" width="1" height="1.4" fill="#222" opacity="0.42"/><rect x="45" y="38.2" width="1" height="1.4" fill="#222" opacity="0.42"/><rect x="46" y="38.2" width="1" height="1.4" fill="#222" opacity="0.42"/><rect x="47" y="38.2" width="1" height="1.4" fill="#222" opacity="0.62"/><rect x="48" y="38.2" width="1" height="1.4" fill="#222" opacity="0.2"/><rect x="49" y="38.2" width="1" height="1.4" fill="#222" opacity="0.62"/><rect x="50" y="38.2" width="1" height="1.4" fill="#222" opacity="0.42"/><rect x="51" y="38.2" width="1" height="1.4" fill="#222" opacity="0.62"/><rect x="52" y="38.2" width="1" height="1.4" fill="#222" opacity="0.42"/><rect x="53" y="38.2" width="1" height="1.4" fill="#222" opacity="0.62"/><rect x="54" y="38.2" width="1" height="1.4" fill="#222" opacity="0.42"/><rect x="55" y="38.2" width="1" height="1.4" fill="#222" opacity="0.42"/><rect x="56" y="38.2" width="1" height="1.4" fill="#222" opacity="0.42"/><rect x="57" y="38.2" width="1" height="1.4" fill="#222" opacity="0.2"/><rect x="58" y="38.2" width="1" height="1.4" fill="#222" opacity="0.42"/><rect x="59" y="38.2" width="1" height="1.4" fill="#222" opacity="0.42"/><rect x="60" y="38.2" width="1" height="1.4" fill="#222" opacity="0.62"/><rect x="61" y="38.2" width="1" height="1.4" fill="#222" opacity="0.42"/><rect x="62" y="38.2" width="1" height="1.4" fill="#222" opacity="0.42"/><rect x="63" y="38.2" width="1" height="1.4" fill="#222" opacity="0.42"/><rect x="64" y="38.2" width="1" height="1.4" fill="#222" opacity="0.2"/><rect x="8" y="40.2" width="1" height="1.4" fill="#af00db" opacity="0.55"/><rect x="9" y="40.2" width="1" height="1.4" fill="#af00db" opacity="0.55"/><rect x="10" y="40.2" width="1" height="1.4" fill="#af00db" opacity="0.55"/><rect x="11" y="40.2" width="1" height="1.4" fill="#af00db" opacity="0.55"/><rect x="12" y="40.2" width="1" height="1.4" fill="#af00db" opacity="0.7"/><rect x="13" y="40.2" width="1" height="1.4" fill="#319331" opacity="0.7"/><rect x="14" y="40.2" width="1" height="1.4" fill="#0000ff" opacity="0.7"/><rect x="15" y="40.2" width="1" height="1.4" fill="#0000ff" opacity="0.55"/><rect x="16" y="40.2" width="1" height="1.4" fill="#0000ff" opacity="0.55"/><rect x="17" y="40.2" width="1" height="1.4" fill="#0000ff" opacity="0.7"/><rect x="18" y="40.2" width="1" height="1.4" fill="#0000ff" opacity="0.55"/><rect x="19" y="40.2" width="1" height="1.4" fill="#0000ff" opacity="0.55"/><rect x="20" y="40.2" width="1" height="1.4" fill="#0000ff" opacity="0.55"/><rect x="21" y="40.2" width="1" height="1.4" fill="#0000ff" opacity="0.7"/><rect x="23" y="40.2" width="1" height="1.4" fill="#222" opacity="0.42"/><rect x="24" y="40.2" width="1" height="1.4" fill="#222" opacity="0.42"/><rect x="25" y="40.2" width="1" height="1.4" fill="#222" opacity="0.62"/><rect x="26" y="40.2" width="1" height="1.4" fill="#222" opacity="0.42"/><rect x="27" y="40.2" width="1" height="1.4" fill="#222" opacity="0.42"/><rect x="28" y="40.2" width="1" height="1.4" fill="#222" opacity="0.42"/><rect x="29" y="40.2" width="1" height="1.4" fill="#222" opacity="0.2"/><rect x="30" y="40.2" width="1" height="1.4" fill="#222" opacity="0.42"/><rect x="31" y="40.2" width="1" height="1.4" fill="#222" opacity="0.42"/><rect x="32" y="40.2" width="1" height="1.4" fill="#222" opacity="0.62"/><rect x="33" y="40.2" width="1" height="1.4" fill="#222" opacity="0.42"/><rect x="34" y="40.2" width="1" height="1.4" fill="#222" opacity="0.42"/><rect x="35" y="40.2" width="1" height="1.4" fill="#222" opacity="0.2"/><rect x="36" y="40.2" width="1" height="1.4" fill="#222" opacity="0.42"/><rect x="37" y="40.2" width="1" height="1.4" fill="#222" opacity="0.62"/><rect x="38" y="40.2" width="1" height="1.4" fill="#319331" opacity="0.7"/><rect x="40" y="40.2" width="1" height="1.4" fill="#778899" opacity="0.55"/><rect x="42" y="40.2" width="1" height="1.4" fill="#098658" opacity="0.55"/><rect x="44" y="40.2" width="1" height="1.4" fill="#0000ff" opacity="0.55"/><rect x="45" y="40.2" width="1" height="1.4" fill="#0000ff" opacity="0.55"/><rect x="47" y="40.2" width="1" height="1.4" fill="#222" opacity="0.42"/><rect x="48" y="40.2" width="1" height="1.4" fill="#222" opacity="0.42"/><rect x="49" y="40.2" width="1" height="1.4" fill="#222" opacity="0.2"/><rect x="50" y="40.2" width="1" height="1.4" fill="#222" opacity="0.42"/><rect x="51" y="40.2" width="1" height="1.4" fill="#222" opacity="0.42"/><rect x="52" y="40.2" width="1" height="1.4" fill="#222" opacity="0.62"/><rect x="53" y="40.2" width="1" height="1.4" fill="#222" opacity="0.42"/><rect x="54" y="40.2" width="1" height="1.4" fill="#222" opacity="0.42"/><rect x="55" y="40.2" width="1" height="1.4" fill="#222" opacity="0.62"/><rect x="56" y="40.2" width="1" height="1.4" fill="#222" opacity="0.2"/><rect x="57" y="40.2" width="1" height="1.4" fill="#222" opacity="0.62"/><rect x="58" y="40.2" width="1" height="1.4" fill="#222" opacity="0.42"/><rect x="59" y="40.2" width="1" height="1.4" fill="#222" opacity="0.62"/><rect x="60" y="40.2" width="1" height="1.4" fill="#222" opacity="0.42"/><rect x="61" y="40.2" width="1" height="1.4" fill="#222" opacity="0.42"/><rect x="62" y="40.2" width="1" height="1.4" fill="#222" opacity="0.2"/><rect x="8" y="42.2" width="1" height="1.4" fill="#af00db" opacity="0.55"/><rect x="9" y="42.2" width="1" height="1.4" fill="#af00db" opacity="0.55"/><rect x="10" y="42.2" width="1" height="1.4" fill="#af00db" opacity="0.55"/><rect x="11" y="42.2" width="1" height="1.4" fill="#319331" opacity="0.7"/><rect x="12" y="42.2" width="1" height="1.4" fill="#222" opacity="0.42"/><rect x="13" y="42.2" width="1" height="1.4" fill="#222" opacity="0.42"/><rect x="14" y="42.2" width="1" height="1.4" fill="#222" opacity="0.62"/><rect x="15" y="42.2" width="1" height="1.4" fill="#222" opacity="0.42"/><rect x="16" y="42.2" width="1" height="1.4" fill="#222" opacity="0.42"/><rect x="17" y="42.2" width="1" height="1.4" fill="#222" opacity="0.42"/><rect x="18" y="42.2" width="1" height="1.4" fill="#222" opacity="0.2"/><rect x="19" y="42.2" width="1" height="1.4" fill="#222" opacity="0.42"/><rect x="20" y="42.2" width="1" height="1.4" fill="#222" opacity="0.42"/><rect x="21" y="42.2" width="1" height="1.4" fill="#222" opacity="0.62"/><rect x="22" y="42.2" width="1" height="1.4" fill="#222" opacity="0.42"/><rect x="23" y="42.2" width="1" height="1.4" fill="#222" opacity="0.42"/><rect x="24" y="42.2" width="1" height="1.4" fill="#222" opacity="0.42"/><rect x="25" y="42.2" width="1" height="1.4" fill="#222" opacity="0.62"/><rect x="26" y="42.2" width="1" height="1.4" fill="#222" opacity="0.2"/><rect x="27" y="42.2" width="1" height="1.4" fill="#222" opacity="0.42"/><rect x="28" y="42.2" width="1" height="1.4" fill="#222" opacity="0.62"/><rect x="29" y="42.2" width="1" height="1.4" fill="#319331" opacity="0.7"/><rect x="31" y="42.2" width="1" height="1.4" fill="#0000ff" opacity="0.55"/><rect x="32" y="42.2" width="1" height="1.4" fill="#0000ff" opacity="0.55"/><rect x="34" y="42.2" width="1" height="1.4" fill="#222" opacity="0.62"/><rect x="35" y="42.2" width="1" height="1.4" fill="#222" opacity="0.42"/><rect x="36" y="42.2" width="1" height="1.4" fill="#222" opacity="0.42"/><rect x="37" y="42.2" width="1" height="1.4" fill="#222" opacity="0.42"/><rect x="38" y="42.2" width="1" height="1.4" fill="#222" opacity="0.62"/><rect x="39" y="42.2" width="1" height="1.4" fill="#222" opacity="0.2"/><rect x="40" y="42.2" width="1" height="1.4" fill="#222" opacity="0.42"/><rect x="41" y="42.2" width="1" height="1.4" fill="#222" opacity="0.42"/><rect x="42" y="42.2" width="1" height="1.4" fill="#222" opacity="0.62"/><rect x="43" y="42.2" width="1" height="1.4" fill="#222" opacity="0.42"/><rect x="44" y="42.2" width="1" height="1.4" fill="#222" opacity="0.42"/><rect x="45" y="42.2" width="1" height="1.4" fill="#222" opacity="0.42"/><rect x="46" y="42.2" width="1" height="1.4" fill="#222" opacity="0.62"/><rect x="47" y="42.2" width="1" height="1.4" fill="#222" opacity="0.2"/><rect x="48" y="42.2" width="1" height="1.4" fill="#222" opacity="0.42"/><rect x="49" y="42.2" width="1" height="1.4" fill="#222" opacity="0.62"/><rect x="50" y="42.2" width="1" height="1.4" fill="#222" opacity="0.2"/><rect x="8" y="44.2" width="1" height="1.4" fill="#af00db" opacity="0.55"/><rect x="9" y="44.2" width="1" height="1.4" fill="#af00db" opacity="0.55"/><rect x="10" y="44.2" width="1" height="1.4" fill="#af00db" opacity="0.55"/><rect x="11" y="44.2" width="1" height="1.4" fill="#319331" opacity="0.7"/><rect x="12" y="44.2" width="1" height="1.4" fill="#222" opacity="0.42"/><rect x="13" y="44.2" width="1" height="1.4" fill="#222" opacity="0.42"/><rect x="14" y="44.2" width="1" height="1.4" fill="#222" opacity="0.62"/><rect x="15" y="44.2" width="1" height="1.4" fill="#222" opacity="0.42"/><rect x="16" y="44.2" width="1" height="1.4" fill="#222" opacity="0.42"/><rect x="17" y="44.2" width="1" height="1.4" fill="#222" opacity="0.42"/><rect x="18" y="44.2" width="1" height="1.4" fill="#222" opacity="0.2"/><rect x="19" y="44.2" width="1" height="1.4" fill="#222" opacity="0.42"/><rect x="20" y="44.2" width="1" height="1.4" fill="#222" opacity="0.42"/><rect x="21" y="44.2" width="1" height="1.4" fill="#222" opacity="0.62"/><rect x="22" y="44.2" width="1" height="1.4" fill="#222" opacity="0.42"/><rect x="23" y="44.2" width="1" height="1.4" fill="#222" opacity="0.42"/><rect x="24" y="44.2" width="1" height="1.4" fill="#222" opacity="0.42"/><rect x="25" y="44.2" width="1" height="1.4" fill="#222" opacity="0.62"/><rect x="26" y="44.2" width="1" height="1.4" fill="#222" opacity="0.2"/><rect x="27" y="44.2" width="1" height="1.4" fill="#222" opacity="0.42"/><rect x="28" y="44.2" width="1" height="1.4" fill="#222" opacity="0.62"/><rect x="29" y="44.2" width="1" height="1.4" fill="#319331" opacity="0.7"/><rect x="31" y="44.2" width="1" height="1.4" fill="#0000ff" opacity="0.55"/><rect x="32" y="44.2" width="1" height="1.4" fill="#0000ff" opacity="0.55"/><rect x="34" y="44.2" width="1" height="1.4" fill="#222" opacity="0.62"/><rect x="35" y="44.2" width="1" height="1.4" fill="#222" opacity="0.42"/><rect x="36" y="44.2" width="1" height="1.4" fill="#222" opacity="0.42"/><rect x="37" y="44.2" width="1" height="1.4" fill="#222" opacity="0.62"/><rect x="38" y="44.2" width="1" height="1.4" fill="#222" opacity="0.2"/><rect x="39" y="44.2" width="1" height="1.4" fill="#222" opacity="0.42"/><rect x="40" y="44.2" width="1" height="1.4" fill="#222" opacity="0.42"/><rect x="41" y="44.2" width="1" height="1.4" fill="#222" opacity="0.62"/><rect x="42" y="44.2" width="1" height="1.4" fill="#222" opacity="0.42"/><rect x="43" y="44.2" width="1" height="1.4" fill="#222" opacity="0.42"/><rect x="44" y="44.2" width="1" height="1.4" fill="#222" opacity="0.42"/><rect x="45" y="44.2" width="1" height="1.4" fill="#222" opacity="0.62"/><rect x="46" y="44.2" width="1" height="1.4" fill="#222" opacity="0.2"/><rect x="47" y="44.2" width="1" height="1.4" fill="#222" opacity="0.42"/><rect x="48" y="44.2" width="1" height="1.4" fill="#222" opacity="0.62"/><rect x="49" y="44.2" width="1" height="1.4" fill="#222" opacity="0.2"/><rect x="8" y="46.2" width="1" height="1.4" fill="#af00db" opacity="0.55"/><rect x="9" y="46.2" width="1" height="1.4" fill="#af00db" opacity="0.55"/><rect x="10" y="46.2" width="1" height="1.4" fill="#af00db" opacity="0.55"/><rect x="11" y="46.2" width="1" height="1.4" fill="#319331" opacity="0.7"/><rect x="12" y="46.2" width="1" height="1.4" fill="#222" opacity="0.42"/><rect x="13" y="46.2" width="1" height="1.4" fill="#222" opacity="0.42"/><rect x="14" y="46.2" width="1" height="1.4" fill="#222" opacity="0.62"/><rect x="15" y="46.2" width="1" height="1.4" fill="#222" opacity="0.42"/><rect x="16" y="46.2" width="1" height="1.4" fill="#222" opacity="0.42"/><rect x="17" y="46.2" width="1" height="1.4" fill="#222" opacity="0.42"/><rect x="18" y="46.2" width="1" height="1.4" fill="#222" opacity="0.2"/><rect x="19" y="46.2" width="1" height="1.4" fill="#222" opacity="0.42"/><rect x="20" y="46.2" width="1" height="1.4" fill="#222" opacity="0.42"/><rect x="21" y="46.2" width="1" height="1.4" fill="#222" opacity="0.62"/><rect x="22" y="46.2" width="1" height="1.4" fill="#222" opacity="0.62"/><rect x="23" y="46.2" width="1" height="1.4" fill="#222" opacity="0.42"/><rect x="24" y="46.2" width="1" height="1.4" fill="#222" opacity="0.62"/><rect x="25" y="46.2" width="1" height="1.4" fill="#222" opacity="0.42"/><rect x="26" y="46.2" width="1" height="1.4" fill="#222" opacity="0.62"/><rect x="27" y="46.2" width="1" height="1.4" fill="#319331" opacity="0.7"/><rect x="29" y="46.2" width="1" height="1.4" fill="#0000ff" opacity="0.55"/><rect x="30" y="46.2" width="1" height="1.4" fill="#0000ff" opacity="0.55"/><rect x="32" y="46.2" width="1" height="1.4" fill="#222" opacity="0.62"/><rect x="33" y="46.2" width="1" height="1.4" fill="#222" opacity="0.42"/><rect x="34" y="46.2" width="1" height="1.4" fill="#222" opacity="0.62"/><rect x="35" y="46.2" width="1" height="1.4" fill="#222" opacity="0.42"/><rect x="36" y="46.2" width="1" height="1.4" fill="#222" opacity="0.62"/><rect x="37" y="46.2" width="1" height="1.4" fill="#222" opacity="0.42"/><rect x="38" y="46.2" width="1" height="1.4" fill="#222" opacity="0.42"/><rect x="39" y="46.2" width="1" height="1.4" fill="#222" opacity="0.42"/><rect x="40" y="46.2" width="1" height="1.4" fill="#222" opacity="0.2"/><rect x="41" y="46.2" width="1" height="1.4" fill="#222" opacity="0.42"/><rect x="42" y="46.2" width="1" height="1.4" fill="#222" opacity="0.62"/><rect x="43" y="46.2" width="1" height="1.4" fill="#222" opacity="0.42"/><rect x="44" y="46.2" width="1" height="1.4" fill="#222" opacity="0.42"/><rect x="45" y="46.2" width="1" height="1.4" fill="#222" opacity="0.62"/><rect x="46" y="46.2" width="1" height="1.4" fill="#222" opacity="0.2"/><rect x="47" y="46.2" width="1" height="1.4" fill="#222" opacity="0.62"/><rect x="48" y="46.2" width="1" height="1.4" fill="#222" opacity="0.42"/><rect x="49" y="46.2" width="1" height="1.4" fill="#222" opacity="0.42"/><rect x="50" y="46.2" width="1" height="1.4" fill="#222" opacity="0.62"/><rect x="51" y="46.2" width="1" height="1.4" fill="#222" opacity="0.42"/><rect x="52" y="46.2" width="1" height="1.4" fill="#222" opacity="0.42"/><rect x="53" y="46.2" width="1" height="1.4" fill="#222" opacity="0.2"/><rect x="8" y="48.2" width="1" height="1.4" fill="#af00db" opacity="0.55"/><rect x="9" y="48.2" width="1" height="1.4" fill="#af00db" opacity="0.55"/><rect x="10" y="48.2" width="1" height="1.4" fill="#af00db" opacity="0.55"/><rect x="11" y="48.2" width="1" height="1.4" fill="#319331" opacity="0.7"/><rect x="12" y="48.2" width="1" height="1.4" fill="#222" opacity="0.42"/><rect x="13" y="48.2" width="1" height="1.4" fill="#222" opacity="0.42"/><rect x="14" y="48.2" width="1" height="1.4" fill="#222" opacity="0.62"/><rect x="15" y="48.2" width="1" height="1.4" fill="#222" opacity="0.42"/><rect x="16" y="48.2" width="1" height="1.4" fill="#222" opacity="0.42"/><rect x="17" y="48.2" width="1" height="1.4" fill="#222" opacity="0.42"/><rect x="18" y="48.2" width="1" height="1.4" fill="#222" opacity="0.2"/><rect x="19" y="48.2" width="1" height="1.4" fill="#222" opacity="0.62"/><rect x="20" y="48.2" width="1" height="1.4" fill="#222" opacity="0.42"/><rect x="21" y="48.2" width="1" height="1.4" fill="#222" opacity="0.42"/><rect x="22" y="48.2" width="1" height="1.4" fill="#222" opacity="0.2"/><rect x="23" y="48.2" width="1" height="1.4" fill="#222" opacity="0.62"/><rect x="24" y="48.2" width="1" height="1.4" fill="#222" opacity="0.42"/><rect x="25" y="48.2" width="1" height="1.4" fill="#222" opacity="0.42"/><rect x="26" y="48.2" width="1" height="1.4" fill="#222" opacity="0.62"/><rect x="27" y="48.2" width="1" height="1.4" fill="#319331" opacity="0.7"/><rect x="29" y="48.2" width="1" height="1.4" fill="#0000ff" opacity="0.55"/><rect x="30" y="48.2" width="1" height="1.4" fill="#0000ff" opacity="0.55"/><rect x="32" y="48.2" width="1" height="1.4" fill="#222" opacity="0.62"/><rect x="33" y="48.2" width="1" height="1.4" fill="#222" opacity="0.42"/><rect x="34" y="48.2" width="1" height="1.4" fill="#222" opacity="0.62"/><rect x="35" y="48.2" width="1" height="1.4" fill="#222" opacity="0.42"/><rect x="36" y="48.2" width="1" height="1.4" fill="#222" opacity="0.62"/><rect x="37" y="48.2" width="1" height="1.4" fill="#222" opacity="0.42"/><rect x="38" y="48.2" width="1" height="1.4" fill="#222" opacity="0.42"/><rect x="39" y="48.2" width="1" height="1.4" fill="#222" opacity="0.42"/><rect x="40" y="48.2" width="1" height="1.4" fill="#222" opacity="0.2"/><rect x="41" y="48.2" width="1" height="1.4" fill="#222" opacity="0.62"/><rect x="42" y="48.2" width="1" height="1.4" fill="#222" opacity="0.42"/><rect x="43" y="48.2" width="1" height="1.4" fill="#222" opacity="0.42"/><rect x="44" y="48.2" width="1" height="1.4" fill="#222" opacity="0.2"/><rect x="45" y="48.2" width="1" height="1.4" fill="#222" opacity="0.62"/><rect x="46" y="48.2" width="1" height="1.4" fill="#222" opacity="0.42"/><rect x="47" y="48.2" width="1" height="1.4" fill="#222" opacity="0.42"/><rect x="48" y="48.2" width="1" height="1.4" fill="#222" opacity="0.62"/><rect x="49" y="48.2" width="1" height="1.4" fill="#222" opacity="0.2"/><rect x="8" y="50.2" width="1" height="1.4" fill="#af00db" opacity="0.55"/><rect x="9" y="50.2" width="1" height="1.4" fill="#af00db" opacity="0.55"/><rect x="10" y="50.2" width="1" height="1.4" fill="#af00db" opacity="0.55"/><rect x="11" y="50.2" width="1" height="1.4" fill="#319331" opacity="0.7"/><rect x="12" y="50.2" width="1" height="1.4" fill="#222" opacity="0.42"/><rect x="13" y="50.2" width="1" height="1.4" fill="#222" opacity="0.42"/><rect x="14" y="50.2" width="1" height="1.4" fill="#222" opacity="0.62"/><rect x="15" y="50.2" width="1" height="1.4" fill="#222" opacity="0.42"/><rect x="16" y="50.2" width="1" height="1.4" fill="#222" opacity="0.42"/><rect x="17" y="50.2" width="1" height="1.4" fill="#222" opacity="0.42"/><rect x="18" y="50.2" width="1" height="1.4" fill="#222" opacity="0.2"/><rect x="19" y="50.2" width="1" height="1.4" fill="#222" opacity="0.42"/><rect x="20" y="50.2" width="1" height="1.4" fill="#222" opacity="0.42"/><rect x="21" y="50.2" width="1" height="1.4" fill="#222" opacity="0.62"/><rect x="22" y="50.2" width="1" height="1.4" fill="#222" opacity="0.42"/><rect x="23" y="50.2" width="1" height="1.4" fill="#222" opacity="0.42"/><rect x="24" y="50.2" width="1" height="1.4" fill="#222" opacity="0.2"/><rect x="25" y="50.2" width="1" height="1.4" fill="#222" opacity="0.62"/><rect x="26" y="50.2" width="1" height="1.4" fill="#222" opacity="0.42"/><rect x="27" y="50.2" width="1" height="1.4" fill="#222" opacity="0.62"/><rect x="28" y="50.2" width="1" height="1.4" fill="#222" opacity="0.42"/><rect x="29" y="50.2" width="1" height="1.4" fill="#222" opacity="0.62"/><rect x="30" y="50.2" width="1" height="1.4" fill="#319331" opacity="0.7"/><rect x="32" y="50.2" width="1" height="1.4" fill="#0000ff" opacity="0.55"/><rect x="33" y="50.2" width="1" height="1.4" fill="#0000ff" opacity="0.55"/><rect x="35" y="50.2" width="1" height="1.4" fill="#222" opacity="0.62"/><rect x="36" y="50.2" width="1" height="1.4" fill="#222" opacity="0.42"/><rect x="37" y="50.2" width="1" height="1.4" fill="#222" opacity="0.62"/><rect x="38" y="50.2" width="1" height="1.4" fill="#222" opacity="0.42"/><rect x="39" y="50.2" width="1" height="1.4" fill="#222" opacity="0.62"/><rect x="40" y="50.2" width="1" height="1.4" fill="#222" opacity="0.42"/><rect x="41" y="50.2" width="1" height="1.4" fill="#222" opacity="0.42"/><rect x="42" y="50.2" width="1" height="1.4" fill="#222" opacity="0.42"/><rect x="43" y="50.2" width="1" height="1.4" fill="#222" opacity="0.2"/><rect x="44" y="50.2" width="1" height="1.4" fill="#222" opacity="0.42"/><rect x="45" y="50.2" width="1" height="1.4" fill="#222" opacity="0.62"/><rect x="46" y="50.2" width="1" height="1.4" fill="#222" opacity="0.42"/><rect x="47" y="50.2" width="1" height="1.4" fill="#222" opacity="0.42"/><rect x="48" y="50.2" width="1" height="1.4" fill="#222" opacity="0.62"/><rect x="4" y="54.2" width="1" height="1.4" fill="#0000ff" opacity="0.7"/><rect x="5" y="54.2" width="1" height="1.4" fill="#0000ff" opacity="0.55"/><rect x="6" y="54.2" width="1" height="1.4" fill="#0000ff" opacity="0.55"/><rect x="7" y="54.2" width="1" height="1.4" fill="#0000ff" opacity="0.55"/><rect x="9" y="54.2" width="1" height="1.4" fill="#222" opacity="0.42"/><rect x="10" y="54.2" width="1" height="1.4" fill="#222" opacity="0.42"/><rect x="11" y="54.2" width="1" height="1.4" fill="#222" opacity="0.62"/><rect x="12" y="54.2" width="1" height="1.4" fill="#222" opacity="0.42"/><rect x="13" y="54.2" width="1" height="1.4" fill="#222" opacity="0.42"/><rect x="14" y="54.2" width="1" height="1.4" fill="#222" opacity="0.42"/><rect x="4" y="58.2" width="1" height="1.4" fill="#0000ff" opacity="0.7"/><rect x="5" y="58.2" width="1" height="1.4" fill="#0000ff" opacity="0.55"/><rect x="6" y="58.2" width="1" height="1.4" fill="#0000ff" opacity="0.55"/><rect x="7" y="58.2" width="1" height="1.4" fill="#0000ff" opacity="0.55"/><rect x="8" y="58.2" width="1" height="1.4" fill="#0000ff" opacity="0.7"/><rect x="10" y="58.2" width="1" height="1.4" fill="#0000ff" opacity="0.7"/><rect x="11" y="58.2" width="1" height="1.4" fill="#0000ff" opacity="0.7"/><rect x="13" y="58.2" width="1" height="1.4" fill="#098658" opacity="0.55"/><rect x="0" y="62.2" width="1" height="1.4" fill="#0431fa" opacity="0.7"/><rect x="1" y="62.2" width="1" height="1.4" fill="#222" opacity="0.2"/><rect x="0" y="66.2" width="1" height="1.4" fill="#222" opacity="0.62"/><rect x="1" y="66.2" width="1" height="1.4" fill="#222" opacity="0.42"/><rect x="2" y="66.2" width="1" height="1.4" fill="#222" opacity="0.42"/><rect x="3" y="66.2" width="1" height="1.4" fill="#222" opacity="0.42"/><rect x="4" y="66.2" width="1" height="1.4" fill="#222" opacity="0.42"/><rect x="5" y="66.2" width="1" height="1.4" fill="#222" opacity="0.62"/><rect x="7" y="66.2" width="1" height="1.4" fill="#0000ff" opacity="0.55"/><rect x="8" y="66.2" width="1" height="1.4" fill="#0000ff" opacity="0.55"/><rect x="10" y="66.2" width="1" height="1.4" fill="#0431fa" opacity="0.7"/><rect x="4" y="70.2" width="1" height="1.4" fill="#0000ff" opacity="0.55"/><rect x="5" y="70.2" width="1" height="1.4" fill="#0000ff" opacity="0.55"/><rect x="6" y="70.2" width="1" height="1.4" fill="#0000ff" opacity="0.7"/><rect x="7" y="70.2" width="1" height="1.4" fill="#0000ff" opacity="0.55"/><rect x="8" y="70.2" width="1" height="1.4" fill="#0000ff" opacity="0.55"/><rect x="9" y="70.2" width="1" height="1.4" fill="#0000ff" opacity="0.7"/><rect x="8" y="72.2" width="1" height="1.4" fill="#222" opacity="0.42"/><rect x="9" y="72.2" width="1" height="1.4" fill="#222" opacity="0.42"/><rect x="10" y="72.2" width="1" height="1.4" fill="#222" opacity="0.42"/><rect x="11" y="72.2" width="1" height="1.4" fill="#222" opacity="0.62"/><rect x="12" y="72.2" width="1" height="1.4" fill="#222" opacity="0.42"/><rect x="13" y="72.2" width="1" height="1.4" fill="#222" opacity="0.42"/><rect x="14" y="72.2" width="1" height="1.4" fill="#222" opacity="0.42"/><rect x="15" y="72.2" width="1" height="1.4" fill="#222" opacity="0.42"/><rect x="16" y="72.2" width="1" height="1.4" fill="#222" opacity="0.42"/><rect x="17" y="72.2" width="1" height="1.4" fill="#222" opacity="0.2"/><rect x="18" y="72.2" width="1" height="1.4" fill="#778899" opacity="0.55"/><rect x="19" y="72.2" width="1" height="1.4" fill="#222" opacity="0.2"/><rect x="8" y="76.2" width="1" height="1.4" fill="#222" opacity="0.42"/><rect x="9" y="76.2" width="1" height="1.4" fill="#222" opacity="0.42"/><rect x="10" y="76.2" width="1" height="1.4" fill="#222" opacity="0.42"/><rect x="11" y="76.2" width="1" height="1.4" fill="#222" opacity="0.62"/><rect x="12" y="76.2" width="1" height="1.4" fill="#222" opacity="0.42"/><rect x="13" y="76.2" width="1" height="1.4" fill="#222" opacity="0.42"/><rect x="14" y="76.2" width="1" height="1.4" fill="#222" opacity="0.42"/><rect x="15" y="76.2" width="1" height="1.4" fill="#222" opacity="0.42"/><rect x="16" y="76.2" width="1" height="1.4" fill="#222" opacity="0.2"/><rect x="17" y="76.2" width="1" height="1.4" fill="#222" opacity="0.42"/><rect x="18" y="76.2" width="1" height="1.4" fill="#222" opacity="0.42"/><rect x="19" y="76.2" width="1" height="1.4" fill="#222" opacity="0.62"/><rect x="20" y="76.2" width="1" height="1.4" fill="#222" opacity="0.42"/><rect x="21" y="76.2" width="1" height="1.4" fill="#222" opacity="0.42"/><rect x="22" y="76.2" width="1" height="1.4" fill="#222" opacity="0.42"/><rect x="23" y="76.2" width="1" height="1.4" fill="#222" opacity="0.2"/><rect x="24" y="76.2" width="1" height="1.4" fill="#222" opacity="0.42"/><rect x="25" y="76.2" width="1" height="1.4" fill="#222" opacity="0.42"/><rect x="26" y="76.2" width="1" height="1.4" fill="#222" opacity="0.42"/><rect x="27" y="76.2" width="1" height="1.4" fill="#222" opacity="0.42"/><rect x="28" y="76.2" width="1" height="1.4" fill="#222" opacity="0.42"/><rect x="29" y="76.2" width="1" height="1.4" fill="#222" opacity="0.42"/><rect x="30" y="76.2" width="1" height="1.4" fill="#222" opacity="0.62"/><rect x="31" y="76.2" width="1" height="1.4" fill="#222" opacity="0.2"/><rect x="32" y="76.2" width="1" height="1.4" fill="#222" opacity="0.42"/><rect x="33" y="76.2" width="1" height="1.4" fill="#222" opacity="0.42"/><rect x="34" y="76.2" width="1" height="1.4" fill="#222" opacity="0.42"/><rect x="35" y="76.2" width="1" height="1.4" fill="#222" opacity="0.42"/><rect x="36" y="76.2" width="1" height="1.4" fill="#222" opacity="0.62"/><rect x="37" y="76.2" width="1" height="1.4" fill="#222" opacity="0.2"/><rect x="38" y="76.2" width="1" height="1.4" fill="#222" opacity="0.62"/><rect x="39" y="76.2" width="1" height="1.4" fill="#222" opacity="0.42"/><rect x="40" y="76.2" width="1" height="1.4" fill="#222" opacity="0.62"/><rect x="41" y="76.2" width="1" height="1.4" fill="#222" opacity="0.42"/><rect x="42" y="76.2" width="1" height="1.4" fill="#222" opacity="0.62"/><rect x="43" y="76.2" width="1" height="1.4" fill="#222" opacity="0.42"/><rect x="44" y="76.2" width="1" height="1.4" fill="#222" opacity="0.42"/><rect x="45" y="76.2" width="1" height="1.4" fill="#222" opacity="0.42"/><rect x="46" y="76.2" width="1" height="1.4" fill="#222" opacity="0.2"/><rect x="47" y="76.2" width="1" height="1.4" fill="#222" opacity="0.42"/><rect x="48" y="76.2" width="1" height="1.4" fill="#222" opacity="0.42"/><rect x="49" y="76.2" width="1" height="1.4" fill="#222" opacity="0.62"/><rect x="50" y="76.2" width="1" height="1.4" fill="#222" opacity="0.42"/><rect x="51" y="76.2" width="1" height="1.4" fill="#222" opacity="0.42"/><rect x="52" y="76.2" width="1" height="1.4" fill="#222" opacity="0.42"/><rect x="53" y="76.2" width="1" height="1.4" fill="#222" opacity="0.2"/><rect x="8" y="78.2" width="1" height="1.4" fill="#222" opacity="0.42"/><rect x="9" y="78.2" width="1" height="1.4" fill="#222" opacity="0.42"/><rect x="10" y="78.2" width="1" height="1.4" fill="#222" opacity="0.42"/><rect x="11" y="78.2" width="1" height="1.4" fill="#222" opacity="0.62"/><rect x="12" y="78.2" width="1" height="1.4" fill="#222" opacity="0.42"/><rect x="13" y="78.2" width="1" height="1.4" fill="#222" opacity="0.42"/><rect x="14" y="78.2" width="1" height="1.4" fill="#222" opacity="0.42"/><rect x="15" y="78.2" width="1" height="1.4" fill="#222" opacity="0.42"/><rect x="16" y="78.2" width="1" height="1.4" fill="#222" opacity="0.2"/><rect x="17" y="78.2" width="1" height="1.4" fill="#222" opacity="0.42"/><rect x="18" y="78.2" width="1" height="1.4" fill="#222" opacity="0.42"/><rect x="19" y="78.2" width="1" height="1.4" fill="#222" opacity="0.62"/><rect x="20" y="78.2" width="1" height="1.4" fill="#222" opacity="0.42"/><rect x="21" y="78.2" width="1" height="1.4" fill="#222" opacity="0.42"/><rect x="22" y="78.2" width="1" height="1.4" fill="#222" opacity="0.42"/><rect x="23" y="78.2" width="1" height="1.4" fill="#222" opacity="0.2"/><rect x="24" y="78.2" width="1" height="1.4" fill="#222" opacity="0.42"/><rect x="25" y="78.2" width="1" height="1.4" fill="#222" opacity="0.42"/><rect x="26" y="78.2" width="1" height="1.4" fill="#222" opacity="0.42"/><rect x="27" y="78.2" width="1" height="1.4" fill="#222" opacity="0.42"/><rect x="28" y="78.2" width="1" height="1.4" fill="#222" opacity="0.42"/><rect x="29" y="78.2" width="1" height="1.4" fill="#222" opacity="0.42"/><rect x="30" y="78.2" width="1" height="1.4" fill="#222" opacity="0.62"/><rect x="31" y="78.2" width="1" height="1.4" fill="#222" opacity="0.2"/><rect x="32" y="78.2" width="1" height="1.4" fill="#222" opacity="0.62"/><rect x="33" y="78.2" width="1" height="1.4" fill="#222" opacity="0.42"/><rect x="34" y="78.2" width="1" height="1.4" fill="#222" opacity="0.42"/><rect x="35" y="78.2" width="1" height="1.4" fill="#222" opacity="0.42"/><rect x="36" y="78.2" width="1" height="1.4" fill="#222" opacity="0.62"/><rect x="37" y="78.2" width="1" height="1.4" fill="#222" opacity="0.2"/><rect x="38" y="78.2" width="1" height="1.4" fill="#222" opacity="0.42"/><rect x="39" y="78.2" width="1" height="1.4" fill="#222" opacity="0.42"/><rect x="40" y="78.2" width="1" height="1.4" fill="#222" opacity="0.62"/><rect x="41" y="78.2" width="1" height="1.4" fill="#222" opacity="0.42"/><rect x="42" y="78.2" width="1" height="1.4" fill="#222" opacity="0.42"/><rect x="43" y="78.2" width="1" height="1.4" fill="#222" opacity="0.42"/><rect x="44" y="78.2" width="1" height="1.4" fill="#222" opacity="0.62"/><rect x="45" y="78.2" width="1" height="1.4" fill="#222" opacity="0.2"/><rect x="46" y="78.2" width="1" height="1.4" fill="#222" opacity="0.42"/><rect x="47" y="78.2" width="1" height="1.4" fill="#222" opacity="0.62"/><rect x="48" y="78.2" width="1" height="1.4" fill="#222" opacity="0.2"/><rect x="8" y="80.2" width="1" height="1.4" fill="#222" opacity="0.42"/><rect x="9" y="80.2" width="1" height="1.4" fill="#222" opacity="0.42"/><rect x="10" y="80.2" width="1" height="1.4" fill="#222" opacity="0.42"/><rect x="11" y="80.2" width="1" height="1.4" fill="#222" opacity="0.62"/><rect x="12" y="80.2" width="1" height="1.4" fill="#222" opacity="0.42"/><rect x="13" y="80.2" width="1" height="1.4" fill="#222" opacity="0.42"/><rect x="14" y="80.2" width="1" height="1.4" fill="#222" opacity="0.42"/><rect x="15" y="80.2" width="1" height="1.4" fill="#222" opacity="0.42"/><rect x="16" y="80.2" width="1" height="1.4" fill="#222" opacity="0.2"/><rect x="17" y="80.2" width="1" height="1.4" fill="#222" opacity="0.42"/><rect x="18" y="80.2" width="1" height="1.4" fill="#222" opacity="0.42"/><rect x="19" y="80.2" width="1" height="1.4" fill="#222" opacity="0.62"/><rect x="20" y="80.2" width="1" height="1.4" fill="#222" opacity="0.42"/><rect x="21" y="80.2" width="1" height="1.4" fill="#222" opacity="0.42"/><rect x="22" y="80.2" width="1" height="1.4" fill="#222" opacity="0.42"/><rect x="23" y="80.2" width="1" height="1.4" fill="#222" opacity="0.2"/><rect x="24" y="80.2" width="1" height="1.4" fill="#222" opacity="0.42"/><rect x="25" y="80.2" width="1" height="1.4" fill="#222" opacity="0.42"/><rect x="26" y="80.2" width="1" height="1.4" fill="#222" opacity="0.42"/><rect x="27" y="80.2" width="1" height="1.4" fill="#222" opacity="0.42"/><rect x="28" y="80.2" width="1" height="1.4" fill="#222" opacity="0.42"/><rect x="29" y="80.2" width="1" height="1.4" fill="#222" opacity="0.42"/><rect x="30" y="80.2" width="1" height="1.4" fill="#222" opacity="0.62"/><rect x="31" y="80.2" width="1" height="1.4" fill="#222" opacity="0.2"/><rect x="32" y="80.2" width="1" height="1.4" fill="#222" opacity="0.62"/><rect x="33" y="80.2" width="1" height="1.4" fill="#222" opacity="0.42"/><rect x="34" y="80.2" width="1" height="1.4" fill="#222" opacity="0.42"/><rect x="35" y="80.2" width="1" height="1.4" fill="#222" opacity="0.62"/><rect x="36" y="80.2" width="1" height="1.4" fill="#222" opacity="0.2"/><rect x="37" y="80.2" width="1" height="1.4" fill="#222" opacity="0.42"/><rect x="38" y="80.2" width="1" height="1.4" fill="#222" opacity="0.42"/><rect x="39" y="80.2" width="1" height="1.4" fill="#222" opacity="0.62"/><rect x="40" y="80.2" width="1" height="1.4" fill="#222" opacity="0.42"/><rect x="41" y="80.2" width="1" height="1.4" fill="#222" opacity="0.42"/><rect x="42" y="80.2" width="1" height="1.4" fill="#222" opacity="0.42"/><rect x="43" y="80.2" width="1" height="1.4" fill="#222" opacity="0.62"/><rect x="44" y="80.2" width="1" height="1.4" fill="#222" opacity="0.2"/><rect x="45" y="80.2" width="1" height="1.4" fill="#222" opacity="0.42"/><rect x="46" y="80.2" width="1" height="1.4" fill="#222" opacity="0.62"/><rect x="47" y="80.2" width="1" height="1.4" fill="#222" opacity="0.2"/><rect x="8" y="82.2" width="1" height="1.4" fill="#222" opacity="0.42"/><rect x="9" y="82.2" width="1" height="1.4" fill="#222" opacity="0.42"/><rect x="10" y="82.2" width="1" height="1.4" fill="#222" opacity="0.42"/><rect x="11" y="82.2" width="1" height="1.4" fill="#222" opacity="0.62"/><rect x="12" y="82.2" width="1" height="1.4" fill="#222" opacity="0.42"/><rect x="13" y="82.2" width="1" height="1.4" fill="#222" opacity="0.42"/><rect x="14" y="82.2" width="1" height="1.4" fill="#222" opacity="0.42"/><rect x="15" y="82.2" width="1" height="1.4" fill="#222" opacity="0.42"/><rect x="16" y="82.2" width="1" height="1.4" fill="#222" opacity="0.2"/><rect x="17" y="82.2" width="1" height="1.4" fill="#222" opacity="0.42"/><rect x="18" y="82.2" width="1" height="1.4" fill="#222" opacity="0.42"/><rect x="19" y="82.2" width="1" height="1.4" fill="#222" opacity="0.62"/><rect x="20" y="82.2" width="1" height="1.4" fill="#222" opacity="0.42"/><rect x="21" y="82.2" width="1" height="1.4" fill="#222" opacity="0.42"/><rect x="22" y="82.2" width="1" height="1.4" fill="#222" opacity="0.42"/><rect x="23" y="82.2" width="1" height="1.4" fill="#222" opacity="0.2"/><rect x="24" y="82.2" width="1" height="1.4" fill="#222" opacity="0.42"/><rect x="25" y="82.2" width="1" height="1.4" fill="#222" opacity="0.42"/><rect x="26" y="82.2" width="1" height="1.4" fill="#222" opacity="0.42"/><rect x="27" y="82.2" width="1" height="1.4" fill="#222" opacity="0.42"/><rect x="28" y="82.2" width="1" height="1.4" fill="#222" opacity="0.42"/><rect x="29" y="82.2" width="1" height="1.4" fill="#222" opacity="0.42"/><rect x="30" y="82.2" width="1" height="1.4" fill="#222" opacity="0.62"/><rect x="31" y="82.2" width="1" height="1.4" fill="#222" opacity="0.2"/><rect x="32" y="82.2" width="1" height="1.4" fill="#222" opacity="0.62"/><rect x="33" y="82.2" width="1" height="1.4" fill="#222" opacity="0.42"/><rect x="34" y="82.2" width="1" height="1.4" fill="#222" opacity="0.62"/><rect x="35" y="82.2" width="1" height="1.4" fill="#222" opacity="0.42"/><rect x="36" y="82.2" width="1" height="1.4" fill="#222" opacity="0.62"/><rect x="37" y="82.2" width="1" height="1.4" fill="#222" opacity="0.42"/><rect x="38" y="82.2" width="1" height="1.4" fill="#222" opacity="0.42"/><rect x="39" y="82.2" width="1" height="1.4" fill="#222" opacity="0.42"/><rect x="40" y="82.2" width="1" height="1.4" fill="#222" opacity="0.2"/><rect x="41" y="82.2" width="1" height="1.4" fill="#222" opacity="0.42"/><rect x="42" y="82.2" width="1" height="1.4" fill="#222" opacity="0.62"/><rect x="43" y="82.2" width="1" height="1.4" fill="#222" opacity="0.42"/><rect x="44" y="82.2" width="1" height="1.4" fill="#222" opacity="0.42"/><rect x="45" y="82.2" width="1" height="1.4" fill="#222" opacity="0.62"/><rect x="46" y="82.2" width="1" height="1.4" fill="#222" opacity="0.2"/><rect x="47" y="82.2" width="1" height="1.4" fill="#222" opacity="0.62"/><rect x="48" y="82.2" width="1" height="1.4" fill="#222" opacity="0.42"/><rect x="49" y="82.2" width="1" height="1.4" fill="#222" opacity="0.42"/><rect x="50" y="82.2" width="1" height="1.4" fill="#222" opacity="0.62"/><rect x="51" y="82.2" width="1" height="1.4" fill="#222" opacity="0.42"/><rect x="52" y="82.2" width="1" height="1.4" fill="#222" opacity="0.42"/><rect x="53" y="82.2" width="1" height="1.4" fill="#222" opacity="0.2"/><rect x="8" y="84.2" width="1" height="1.4" fill="#222" opacity="0.42"/><rect x="9" y="84.2" width="1" height="1.4" fill="#222" opacity="0.42"/><rect x="10" y="84.2" width="1" height="1.4" fill="#222" opacity="0.42"/><rect x="11" y="84.2" width="1" height="1.4" fill="#222" opacity="0.62"/><rect x="12" y="84.2" width="1" height="1.4" fill="#222" opacity="0.42"/><rect x="13" y="84.2" width="1" height="1.4" fill="#222" opacity="0.42"/><rect x="14" y="84.2" width="1" height="1.4" fill="#222" opacity="0.42"/><rect x="15" y="84.2" width="1" height="1.4" fill="#222" opacity="0.42"/><rect x="16" y="84.2" width="1" height="1.4" fill="#222" opacity="0.2"/><rect x="17" y="84.2" width="1" height="1.4" fill="#222" opacity="0.42"/><rect x="18" y="84.2" width="1" height="1.4" fill="#222" opacity="0.42"/><rect x="19" y="84.2" width="1" height="1.4" fill="#222" opacity="0.62"/><rect x="20" y="84.2" width="1" height="1.4" fill="#222" opacity="0.42"/><rect x="21" y="84.2" width="1" height="1.4" fill="#222" opacity="0.42"/><rect x="22" y="84.2" width="1" height="1.4" fill="#222" opacity="0.42"/><rect x="23" y="84.2" width="1" height="1.4" fill="#222" opacity="0.2"/><rect x="24" y="84.2" width="1" height="1.4" fill="#222" opacity="0.42"/><rect x="25" y="84.2" width="1" height="1.4" fill="#222" opacity="0.42"/><rect x="26" y="84.2" width="1" height="1.4" fill="#222" opacity="0.42"/><rect x="27" y="84.2" width="1" height="1.4" fill="#222" opacity="0.42"/><rect x="28" y="84.2" width="1" height="1.4" fill="#222" opacity="0.42"/><rect x="29" y="84.2" width="1" height="1.4" fill="#222" opacity="0.42"/><rect x="30" y="84.2" width="1" height="1.4" fill="#222" opacity="0.62"/><rect x="31" y="84.2" width="1" height="1.4" fill="#222" opacity="0.2"/><rect x="32" y="84.2" width="1" height="1.4" fill="#222" opacity="0.62"/><rect x="33" y="84.2" width="1" height="1.4" fill="#222" opacity="0.42"/><rect x="34" y="84.2" width="1" height="1.4" fill="#222" opacity="0.62"/><rect x="35" y="84.2" width="1" height="1.4" fill="#222" opacity="0.42"/><rect x="36" y="84.2" width="1" height="1.4" fill="#222" opacity="0.62"/><rect x="37" y="84.2" width="1" height="1.4" fill="#222" opacity="0.42"/><rect x="38" y="84.2" width="1" height="1.4" fill="#222" opacity="0.42"/><rect x="39" y="84.2" width="1" height="1.4" fill="#222" opacity="0.42"/><rect x="40" y="84.2" width="1" height="1.4" fill="#222" opacity="0.2"/><rect x="41" y="84.2" width="1" height="1.4" fill="#222" opacity="0.62"/><rect x="42" y="84.2" width="1" height="1.4" fill="#222" opacity="0.42"/><rect x="43" y="84.2" width="1" height="1.4" fill="#222" opacity="0.42"/><rect x="44" y="84.2" width="1" height="1.4" fill="#222" opacity="0.2"/><rect x="45" y="84.2" width="1" height="1.4" fill="#222" opacity="0.62"/><rect x="46" y="84.2" width="1" height="1.4" fill="#222" opacity="0.42"/><rect x="47" y="84.2" width="1" height="1.4" fill="#222" opacity="0.42"/><rect x="48" y="84.2" width="1" height="1.4" fill="#222" opacity="0.62"/><rect x="49" y="84.2" width="1" height="1.4" fill="#222" opacity="0.2"/><rect x="8" y="86.2" width="1" height="1.4" fill="#222" opacity="0.42"/><rect x="9" y="86.2" width="1" height="1.4" fill="#222" opacity="0.42"/><rect x="10" y="86.2" width="1" height="1.4" fill="#222" opacity="0.42"/><rect x="11" y="86.2" width="1" height="1.4" fill="#222" opacity="0.62"/><rect x="12" y="86.2" width="1" height="1.4" fill="#222" opacity="0.42"/><rect x="13" y="86.2" width="1" height="1.4" fill="#222" opacity="0.42"/><rect x="14" y="86.2" width="1" height="1.4" fill="#222" opacity="0.42"/><rect x="15" y="86.2" width="1" height="1.4" fill="#222" opacity="0.42"/><rect x="16" y="86.2" width="1" height="1.4" fill="#222" opacity="0.2"/><rect x="17" y="86.2" width="1" height="1.4" fill="#222" opacity="0.42"/><rect x="18" y="86.2" width="1" height="1.4" fill="#222" opacity="0.42"/><rect x="19" y="86.2" width="1" height="1.4" fill="#222" opacity="0.62"/><rect x="20" y="86.2" width="1" height="1.4" fill="#222" opacity="0.42"/><rect x="21" y="86.2" width="1" height="1.4" fill="#222" opacity="0.42"/><rect x="22" y="86.2" width="1" height="1.4" fill="#222" opacity="0.42"/><rect x="23" y="86.2" width="1" height="1.4" fill="#222" opacity="0.2"/><rect x="24" y="86.2" width="1" height="1.4" fill="#222" opacity="0.42"/><rect x="25" y="86.2" width="1" height="1.4" fill="#222" opacity="0.42"/><rect x="26" y="86.2" width="1" height="1.4" fill="#222" opacity="0.42"/><rect x="27" y="86.2" width="1" height="1.4" fill="#222" opacity="0.42"/><rect x="28" y="86.2" width="1" height="1.4" fill="#222" opacity="0.42"/><rect x="29" y="86.2" width="1" height="1.4" fill="#222" opacity="0.42"/><rect x="30" y="86.2" width="1" height="1.4" fill="#222" opacity="0.62"/><rect x="31" y="86.2" width="1" height="1.4" fill="#222" opacity="0.2"/><rect x="32" y="86.2" width="1" height="1.4" fill="#222" opacity="0.62"/><rect x="33" y="86.2" width="1" height="1.4" fill="#222" opacity="0.42"/><rect x="34" y="86.2" width="1" height="1.4" fill="#222" opacity="0.62"/><rect x="35" y="86.2" width="1" height="1.4" fill="#222" opacity="0.42"/><rect x="36" y="86.2" width="1" height="1.4" fill="#222" opacity="0.62"/><rect x="37" y="86.2" width="1" height="1.4" fill="#222" opacity="0.42"/><rect x="38" y="86.2" width="1" height="1.4" fill="#222" opacity="0.42"/><rect x="39" y="86.2" width="1" height="1.4" fill="#222" opacity="0.42"/><rect x="40" y="86.2" width="1" height="1.4" fill="#222" opacity="0.2"/><rect x="41" y="86.2" width="1" height="1.4" fill="#222" opacity="0.42"/><rect x="42" y="86.2" width="1" height="1.4" fill="#222" opacity="0.62"/><rect x="43" y="86.2" width="1" height="1.4" fill="#222" opacity="0.42"/><rect x="44" y="86.2" width="1" height="1.4" fill="#222" opacity="0.42"/><rect x="45" y="86.2" width="1" height="1.4" fill="#222" opacity="0.62"/><rect x="46" y="86.2" width="1" height="1.4" fill="#222" opacity="0.2"/><rect x="8" y="90.2" width="1" height="1.4" fill="#0000ff" opacity="0.55"/><rect x="9" y="90.2" width="1" height="1.4" fill="#0000ff" opacity="0.55"/><rect x="10" y="90.2" width="1" height="1.4" fill="#0000ff" opacity="0.55"/><rect x="11" y="90.2" width="1" height="1.4" fill="#0000ff" opacity="0.55"/><rect x="12" y="92.2" width="1" height="1.4" fill="#0000ff" opacity="0.55"/><rect x="13" y="92.2" width="1" height="1.4" fill="#0000ff" opacity="0.7"/><rect x="14" y="92.2" width="1" height="1.4" fill="#0000ff" opacity="0.55"/><rect x="15" y="92.2" width="1" height="1.4" fill="#0000ff" opacity="0.55"/><rect x="17" y="92.2" width="1" height="1.4" fill="#222" opacity="0.42"/><rect x="18" y="92.2" width="1" height="1.4" fill="#222" opacity="0.42"/><rect x="19" y="92.2" width="1" height="1.4" fill="#222" opacity="0.42"/><rect x="20" y="92.2" width="1" height="1.4" fill="#222" opacity="0.62"/><rect x="21" y="92.2" width="1" height="1.4" fill="#222" opacity="0.42"/><rect x="22" y="92.2" width="1" height="1.4" fill="#222" opacity="0.42"/><rect x="23" y="92.2" width="1" height="1.4" fill="#222" opacity="0.42"/><rect x="24" y="92.2" width="1" height="1.4" fill="#222" opacity="0.42"/><rect x="25" y="92.2" width="1" height="1.4" fill="#222" opacity="0.2"/><rect x="26" y="92.2" width="1" height="1.4" fill="#222" opacity="0.42"/><rect x="27" y="92.2" width="1" height="1.4" fill="#222" opacity="0.42"/><rect x="28" y="92.2" width="1" height="1.4" fill="#222" opacity="0.62"/><rect x="29" y="92.2" width="1" height="1.4" fill="#222" opacity="0.42"/><rect x="30" y="92.2" width="1" height="1.4" fill="#222" opacity="0.42"/><rect x="31" y="92.2" width="1" height="1.4" fill="#222" opacity="0.42"/><rect x="32" y="92.2" width="1" height="1.4" fill="#222" opacity="0.2"/><rect x="33" y="92.2" width="1" height="1.4" fill="#222" opacity="0.42"/><rect x="34" y="92.2" width="1" height="1.4" fill="#222" opacity="0.42"/><rect x="35" y="92.2" width="1" height="1.4" fill="#222" opacity="0.42"/><rect x="36" y="92.2" width="1" height="1.4" fill="#222" opacity="0.42"/><rect x="37" y="92.2" width="1" height="1.4" fill="#222" opacity="0.42"/><rect x="38" y="92.2" width="1" height="1.4" fill="#222" opacity="0.42"/><rect x="39" y="92.2" width="1" height="1.4" fill="#222" opacity="0.62"/><rect x="40" y="92.2" width="1" height="1.4" fill="#222" opacity="0.2"/><rect x="41" y="92.2" width="1" height="1.4" fill="#222" opacity="0.42"/><rect x="42" y="92.2" width="1" height="1.4" fill="#222" opacity="0.42"/><rect x="43" y="92.2" width="1" height="1.4" fill="#222" opacity="0.2"/><rect x="44" y="92.2" width="1" height="1.4" fill="#222" opacity="0.42"/><rect x="45" y="92.2" width="1" height="1.4" fill="#222" opacity="0.42"/><rect x="46" y="92.2" width="1" height="1.4" fill="#222" opacity="0.62"/><rect x="47" y="92.2" width="1" height="1.4" fill="#222" opacity="0.42"/><rect x="48" y="92.2" width="1" height="1.4" fill="#222" opacity="0.42"/><rect x="49" y="92.2" width="1" height="1.4" fill="#222" opacity="0.62"/><rect x="50" y="92.2" width="1" height="1.4" fill="#222" opacity="0.2"/><rect x="51" y="92.2" width="1" height="1.4" fill="#222" opacity="0.62"/><rect x="52" y="92.2" width="1" height="1.4" fill="#222" opacity="0.42"/><rect x="53" y="92.2" width="1" height="1.4" fill="#222" opacity="0.62"/><rect x="54" y="92.2" width="1" height="1.4" fill="#222" opacity="0.42"/><rect x="55" y="92.2" width="1" height="1.4" fill="#222" opacity="0.42"/><rect x="57" y="92.2" width="1" height="1.4" fill="#0000ff" opacity="0.7"/><rect x="58" y="92.2" width="1" height="1.4" fill="#0000ff" opacity="0.7"/><rect x="59" y="92.2" width="1" height="1.4" fill="#0000ff" opacity="0.55"/><rect x="60" y="92.2" width="1" height="1.4" fill="#0000ff" opacity="0.55"/><rect x="62" y="92.2" width="1" height="1.4" fill="#a31515" opacity="0.55"/><rect x="63" y="92.2" width="1" height="1.4" fill="#a31515" opacity="0.55"/><rect x="64" y="92.2" width="1" height="1.4" fill="#a31515" opacity="0.55"/><rect x="65" y="92.2" width="1" height="1.4" fill="#a31515" opacity="0.7"/><rect x="66" y="92.2" width="1" height="1.4" fill="#a31515" opacity="0.55"/><rect x="67" y="92.2" width="1" height="1.4" fill="#a31515" opacity="0.55"/><rect x="68" y="92.2" width="1" height="1.4" fill="#a31515" opacity="0.55"/><rect x="69" y="92.2" width="1" height="1.4" fill="#a31515" opacity="0.55"/><rect x="70" y="92.2" width="1" height="1.4" fill="#a31515" opacity="0.55"/><rect x="71" y="92.2" width="1" height="1.4" fill="#a31515" opacity="0.7"/><rect x="72" y="92.2" width="1" height="1.4" fill="#a31515" opacity="0.55"/><rect x="12" y="94.2" width="1" height="1.4" fill="#0000ff" opacity="0.55"/><rect x="13" y="94.2" width="1" height="1.4" fill="#0000ff" opacity="0.7"/><rect x="14" y="94.2" width="1" height="1.4" fill="#0000ff" opacity="0.55"/><rect x="15" y="94.2" width="1" height="1.4" fill="#0000ff" opacity="0.55"/><rect x="17" y="94.2" width="1" height="1.4" fill="#a31515" opacity="0.55"/><rect x="18" y="94.2" width="1" height="1.4" fill="#a31515" opacity="0.55"/><rect x="19" y="94.2" width="1" height="1.4" fill="#a31515" opacity="0.55"/><rect x="20" y="94.2" width="1" height="1.4" fill="#a31515" opacity="0.55"/><rect x="21" y="94.2" width="1" height="1.4" fill="#a31515" opacity="0.55"/><rect x="8" y="96.2" width="1" height="1.4" fill="#0000ff" opacity="0.55"/><rect x="9" y="96.2" width="1" height="1.4" fill="#0000ff" opacity="0.55"/><rect x="10" y="96.2" width="1" height="1.4" fill="#0000ff" opacity="0.7"/><rect x="12" y="96.2" width="1" height="1.4" fill="#0000ff" opacity="0.55"/><rect x="13" y="96.2" width="1" height="1.4" fill="#0000ff" opacity="0.55"/><rect x="15" y="96.2" width="1" height="1.4" fill="#222" opacity="0.42"/><rect x="16" y="96.2" width="1" height="1.4" fill="#222" opacity="0.42"/><rect x="17" y="96.2" width="1" height="1.4" fill="#222" opacity="0.42"/><rect x="18" y="96.2" width="1" height="1.4" fill="#222" opacity="0.62"/><rect x="19" y="96.2" width="1" height="1.4" fill="#222" opacity="0.42"/><rect x="20" y="96.2" width="1" height="1.4" fill="#222" opacity="0.42"/><rect x="21" y="96.2" width="1" height="1.4" fill="#222" opacity="0.42"/><rect x="22" y="96.2" width="1" height="1.4" fill="#222" opacity="0.42"/><rect x="23" y="96.2" width="1" height="1.4" fill="#222" opacity="0.2"/><rect x="24" y="96.2" width="1" height="1.4" fill="#222" opacity="0.62"/><rect x="25" y="96.2" width="1" height="1.4" fill="#222" opacity="0.62"/><rect x="26" y="96.2" width="1" height="1.4" fill="#222" opacity="0.62"/><rect x="27" y="96.2" width="1" height="1.4" fill="#222" opacity="0.42"/><rect x="4" y="100.2" width="1" height="1.4" fill="#0000ff" opacity="0.7"/><rect x="5" y="100.2" width="1" height="1.4" fill="#0000ff" opacity="0.55"/><rect x="6" y="100.2" width="1" height="1.4" fill="#0000ff" opacity="0.55"/><rect x="7" y="100.2" width="1" height="1.4" fill="#0000ff" opacity="0.55"/><rect x="9" y="100.2" width="1" height="1.4" fill="#222" opacity="0.42"/><rect x="10" y="100.2" width="1" height="1.4" fill="#222" opacity="0.42"/><rect x="11" y="100.2" width="1" height="1.4" fill="#222" opacity="0.42"/><rect x="12" y="100.2" width="1" height="1.4" fill="#222" opacity="0.62"/><rect x="13" y="100.2" width="1" height="1.4" fill="#222" opacity="0.42"/><rect x="14" y="100.2" width="1" height="1.4" fill="#222" opacity="0.42"/><rect x="15" y="100.2" width="1" height="1.4" fill="#222" opacity="0.42"/><rect x="16" y="100.2" width="1" height="1.4" fill="#222" opacity="0.42"/><rect x="17" y="100.2" width="1" height="1.4" fill="#222" opacity="0.42"/><rect x="4" y="104.2" width="1" height="1.4" fill="#0000ff" opacity="0.7"/><rect x="5" y="104.2" width="1" height="1.4" fill="#0000ff" opacity="0.55"/><rect x="6" y="104.2" width="1" height="1.4" fill="#0000ff" opacity="0.7"/><rect x="7" y="104.2" width="1" height="1.4" fill="#0000ff" opacity="0.7"/><rect x="9" y="104.2" width="1" height="1.4" fill="#0000ff" opacity="0.7"/><rect x="10" y="104.2" width="1" height="1.4" fill="#0000ff" opacity="0.55"/><rect x="11" y="104.2" width="1" height="1.4" fill="#0000ff" opacity="0.55"/><rect x="12" y="104.2" width="1" height="1.4" fill="#0000ff" opacity="0.55"/><rect x="14" y="104.2" width="1" height="1.4" fill="#222" opacity="0.42"/><rect x="15" y="104.2" width="1" height="1.4" fill="#222" opacity="0.42"/><rect x="16" y="104.2" width="1" height="1.4" fill="#222" opacity="0.42"/><rect x="17" y="104.2" width="1" height="1.4" fill="#222" opacity="0.62"/><rect x="18" y="104.2" width="1" height="1.4" fill="#222" opacity="0.42"/><rect x="19" y="104.2" width="1" height="1.4" fill="#222" opacity="0.42"/><rect x="20" y="104.2" width="1" height="1.4" fill="#222" opacity="0.42"/><rect x="21" y="104.2" width="1" height="1.4" fill="#222" opacity="0.42"/><rect x="22" y="104.2" width="1" height="1.4" fill="#222" opacity="0.2"/><rect x="23" y="104.2" width="1" height="1.4" fill="#222" opacity="0.42"/><rect x="24" y="104.2" width="1" height="1.4" fill="#222" opacity="0.42"/><rect x="25" y="104.2" width="1" height="1.4" fill="#222" opacity="0.62"/><rect x="26" y="104.2" width="1" height="1.4" fill="#222" opacity="0.42"/><rect x="27" y="104.2" width="1" height="1.4" fill="#222" opacity="0.42"/><rect x="28" y="104.2" width="1" height="1.4" fill="#222" opacity="0.42"/><rect x="29" y="104.2" width="1" height="1.4" fill="#222" opacity="0.2"/><rect x="30" y="104.2" width="1" height="1.4" fill="#222" opacity="0.42"/><rect x="31" y="104.2" width="1" height="1.4" fill="#222" opacity="0.42"/><rect x="32" y="104.2" width="1" height="1.4" fill="#222" opacity="0.42"/><rect x="33" y="104.2" width="1" height="1.4" fill="#222" opacity="0.42"/><rect x="34" y="104.2" width="1" height="1.4" fill="#222" opacity="0.42"/><rect x="35" y="104.2" width="1" height="1.4" fill="#222" opacity="0.42"/><rect x="36" y="104.2" width="1" height="1.4" fill="#222" opacity="0.62"/><rect x="8" y="106.2" width="1" height="1.4" fill="#0000ff" opacity="0.55"/><rect x="9" y="106.2" width="1" height="1.4" fill="#0000ff" opacity="0.55"/><rect x="11" y="106.2" width="1" height="1.4" fill="#222" opacity="0.42"/><rect x="12" y="106.2" width="1" height="1.4" fill="#222" opacity="0.42"/><rect x="13" y="106.2" width="1" height="1.4" fill="#222" opacity="0.42"/><rect x="14" y="106.2" width="1" height="1.4" fill="#222" opacity="0.62"/><rect x="15" y="106.2" width="1" height="1.4" fill="#222" opacity="0.42"/><rect x="16" y="106.2" width="1" height="1.4" fill="#222" opacity="0.42"/><rect x="17" y="106.2" width="1" height="1.4" fill="#222" opacity="0.42"/><rect x="18" y="106.2" width="1" height="1.4" fill="#222" opacity="0.42"/><rect x="19" y="106.2" width="1" height="1.4" fill="#222" opacity="0.42"/><rect x="20" y="106.2" width="1" height="1.4" fill="#222" opacity="0.2"/><rect x="21" y="106.2" width="1" height="1.4" fill="#222" opacity="0.42"/><rect x="22" y="106.2" width="1" height="1.4" fill="#222" opacity="0.42"/><rect x="23" y="106.2" width="1" height="1.4" fill="#222" opacity="0.42"/><rect x="24" y="106.2" width="1" height="1.4" fill="#222" opacity="0.62"/><rect x="25" y="106.2" width="1" height="1.4" fill="#222" opacity="0.42"/><rect x="26" y="106.2" width="1" height="1.4" fill="#222" opacity="0.42"/><rect x="27" y="106.2" width="1" height="1.4" fill="#222" opacity="0.42"/><rect x="28" y="106.2" width="1" height="1.4" fill="#222" opacity="0.42"/><rect x="29" y="106.2" width="1" height="1.4" fill="#222" opacity="0.2"/><rect x="30" y="106.2" width="1" height="1.4" fill="#222" opacity="0.42"/><rect x="31" y="106.2" width="1" height="1.4" fill="#222" opacity="0.62"/><rect x="33" y="106.2" width="1" height="1.4" fill="#778899" opacity="0.55"/><rect x="35" y="106.2" width="1" height="1.4" fill="#222" opacity="0.42"/><rect x="36" y="106.2" width="1" height="1.4" fill="#222" opacity="0.42"/><rect x="37" y="106.2" width="1" height="1.4" fill="#222" opacity="0.42"/><rect x="38" y="106.2" width="1" height="1.4" fill="#222" opacity="0.62"/><rect x="39" y="106.2" width="1" height="1.4" fill="#222" opacity="0.42"/><rect x="40" y="106.2" width="1" height="1.4" fill="#222" opacity="0.42"/><rect x="41" y="106.2" width="1" height="1.4" fill="#222" opacity="0.42"/><rect x="42" y="106.2" width="1" height="1.4" fill="#222" opacity="0.42"/><rect x="43" y="106.2" width="1" height="1.4" fill="#222" opacity="0.2"/><rect x="44" y="106.2" width="1" height="1.4" fill="#222" opacity="0.42"/><rect x="45" y="106.2" width="1" height="1.4" fill="#222" opacity="0.42"/><rect x="46" y="106.2" width="1" height="1.4" fill="#222" opacity="0.62"/><rect x="47" y="106.2" width="1" height="1.4" fill="#222" opacity="0.42"/><rect x="48" y="106.2" width="1" height="1.4" fill="#222" opacity="0.42"/><rect x="49" y="106.2" width="1" height="1.4" fill="#222" opacity="0.42"/><rect x="50" y="106.2" width="1" height="1.4" fill="#222" opacity="0.2"/><rect x="51" y="106.2" width="1" height="1.4" fill="#222" opacity="0.42"/><rect x="52" y="106.2" width="1" height="1.4" fill="#222" opacity="0.42"/><rect x="53" y="106.2" width="1" height="1.4" fill="#222" opacity="0.42"/><rect x="54" y="106.2" width="1" height="1.4" fill="#222" opacity="0.42"/><rect x="55" y="106.2" width="1" height="1.4" fill="#222" opacity="0.42"/><rect x="56" y="106.2" width="1" height="1.4" fill="#222" opacity="0.42"/><rect x="57" y="106.2" width="1" height="1.4" fill="#222" opacity="0.62"/><rect x="58" y="106.2" width="1" height="1.4" fill="#222" opacity="0.2"/><rect x="59" y="106.2" width="1" height="1.4" fill="#222" opacity="0.42"/><rect x="60" y="106.2" width="1" height="1.4" fill="#222" opacity="0.42"/><rect x="61" y="106.2" width="1" height="1.4" fill="#222" opacity="0.42"/><rect x="62" y="106.2" width="1" height="1.4" fill="#222" opacity="0.62"/><rect x="63" y="106.2" width="1" height="1.4" fill="#222" opacity="0.42"/><rect x="64" y="106.2" width="1" height="1.4" fill="#222" opacity="0.42"/><rect x="65" y="106.2" width="1" height="1.4" fill="#222" opacity="0.42"/><rect x="66" y="106.2" width="1" height="1.4" fill="#222" opacity="0.42"/><rect x="67" y="106.2" width="1" height="1.4" fill="#222" opacity="0.2"/><rect x="68" y="106.2" width="1" height="1.4" fill="#222" opacity="0.42"/><rect x="69" y="106.2" width="1" height="1.4" fill="#222" opacity="0.62"/><rect x="0" y="110.2" width="1" height="1.4" fill="#0431fa" opacity="0.7"/><rect x="0" y="114.2" width="1" height="1.4" fill="#0000ff" opacity="0.55"/><rect x="1" y="114.2" width="1" height="1.4" fill="#0000ff" opacity="0.55"/><rect x="2" y="114.2" width="1" height="1.4" fill="#0000ff" opacity="0.7"/><rect x="3" y="114.2" width="1" height="1.4" fill="#0000ff" opacity="0.55"/><rect x="4" y="114.2" width="1" height="1.4" fill="#0000ff" opacity="0.55"/><rect x="5" y="114.2" width="1" height="1.4" fill="#0000ff" opacity="0.7"/><rect x="7" y="114.2" width="1" height="1.4" fill="#778899" opacity="0.55"/><rect x="9" y="114.2" width="1" height="1.4" fill="#0000ff" opacity="0.7"/><rect x="10" y="114.2" width="1" height="1.4" fill="#0000ff" opacity="0.55"/><rect x="11" y="114.2" width="1" height="1.4" fill="#0000ff" opacity="0.55"/><rect x="12" y="114.2" width="1" height="1.4" fill="#0000ff" opacity="0.55"/><rect x="14" y="114.2" width="1" height="1.4" fill="#222" opacity="0.62"/><rect x="15" y="114.2" width="1" height="1.4" fill="#222" opacity="0.42"/><rect x="16" y="114.2" width="1" height="1.4" fill="#222" opacity="0.42"/><rect x="17" y="114.2" width="1" height="1.4" fill="#222" opacity="0.42"/><rect x="18" y="114.2" width="1" height="1.4" fill="#222" opacity="0.42"/><rect x="19" y="114.2" width="1" height="1.4" fill="#222" opacity="0.62"/></svg><div class="b" style="left:1345px;top:77px;width:1px;height:614px;background:#e3e3e3;"></div><div class="b" style="left:1346px;top:122px;width:13px;height:2px;background:#2b2b2b;"></div><div class="b" style="left:268px;top:691px;width:1091px;height:1px;background:#e2e5ea;"></div><div class="b" style="left:268px;top:692px;width:1091px;height:47px;background:#fff;"></div><div class="b" style="left:268px;top:739px;width:1091px;height:1px;background:#e2e5ea;"></div><div class="b" style="left:280.4px;top:699.4px;width:86.2px;height:31.2px;border:1px solid #5f6875;border-radius:6px;box-sizing:border-box;background:#fff;"></div><svg class="b" style="left:289px;top:708px;" width="15" height="15" viewBox="0 0 15 15" fill="none"><rect x="1.6" y="1.7" width="11.2" height="11.2" stroke="#1a202c" stroke-width="1.2"/><rect x="1.6" y="1.7" width="11.2" height="2.2" fill="#1a202c"/><path d="M1.6 5.9h11.2M1.6 9.2h11.2M7.2 3.9v9" stroke="#1a202c" stroke-width="1.1"/></svg><div class="t" style="left:310.52px;top:708.95px;font-size:13.4px;color:#1a202c;transform:scaleX(0.9775);">Preview</div><div class="b" style="left:375.4px;top:699.4px;width:88.2px;height:31.2px;border:1px solid #5f6875;border-radius:6px;box-sizing:border-box;background:#fff;"></div><svg class="b" style="left:383px;top:710px;" width="16" height="11" viewBox="0 0 16 11" fill="none"><path d="M4.2 2.3L1.4 5.3l2.8 3M11.8 2.3l2.8 3-2.8 3M9.3 1.2L6.7 9.6" stroke="#1a202c" stroke-width="1.1"/></svg><div class="t" style="left:406.10px;top:708.95px;font-size:13.4px;color:#1a202c;transform:scaleX(0.9883);">Compile</div><div class="b" style="left:472.2px;top:699.4px;width:100.1px;height:31.2px;border:1px solid #5f6875;border-radius:6px;box-sizing:border-box;background:#fff;"></div><div class="b" style="left:541px;top:699.4px;width:1px;height:31.2px;background:#5f6875;"></div><svg class="b" style="left:480px;top:707px;" width="16" height="16" viewBox="0 0 16 16" fill="none"><path d="M10.8 1.6a3.6 3.6 0 0 0-3.4 4.8L1.8 12a1.3 1.3 0 0 0 1.9 1.9l5.6-5.6a3.6 3.6 0 0 0 4.8-3.4l-2 2-2.2-.4-.4-2.2z" stroke="#1a202c" stroke-width="1.1" stroke-linejoin="round"/></svg><div class="t" style="left:502.48px;top:708.95px;font-size:13.4px;color:#1a202c;transform:scaleX(1.0237);">Build</div><svg class="b" style="left:552.5px;top:712px;" width="10" height="7" viewBox="0 0 10 7" fill="none"><path d="M1 1.2l3.6 3.6 3.6-3.6" stroke="#2d3748" stroke-width="1.1"/></svg><div class="b" style="left:581.3px;top:699.4px;width:71.2px;height:31.2px;border:1px solid #5f6875;border-radius:6px;box-sizing:border-box;background:#fff;"></div><div class="b" style="left:621px;top:699.4px;width:1px;height:31.2px;background:#5f6875;"></div><div class="t" style="left:589.75px;top:708.95px;font-size:13.4px;color:#1a202c;transform:scaleX(1.0494);">Lint</div><svg class="b" style="left:632.9px;top:712px;" width="10" height="7" viewBox="0 0 10 7" fill="none"><path d="M1 1.2l3.6 3.6 3.6-3.6" stroke="#2d3748" stroke-width="1.1"/></svg><div class="b" style="left:661.5px;top:699.4px;width:136.1px;height:31.2px;border:1px solid #5f6875;border-radius:6px;box-sizing:border-box;background:#fff;"></div><svg class="b" style="left:670px;top:704px;" width="22" height="22" viewBox="0 0 22 22" fill="none"><path d="M12.5 3.5H3.2V15H9.8L11.6 18.4 13.4 15H18.5V9.6" stroke="#1a202c" stroke-width="1.1" stroke-linejoin="round"/><path d="M12.5 6.6Q12.6 9.4 15.4 9.5Q12.6 9.6 12.5 12.4Q12.4 9.6 9.6 9.5Q12.4 9.4 12.5 6.6z" stroke="#1a202c" stroke-width="0.9" stroke-linejoin="round"/><path d="M16.6 3.3Q16.7 5.1 18.5 5.2Q16.7 5.3 16.6 7.1Q16.5 5.3 14.7 5.2Q16.5 5.1 16.6 3.3z" stroke="#1a202c" stroke-width="0.8" stroke-linejoin="round"/></svg><div class="t" style="left:697.40px;top:708.95px;font-size:13.4px;color:#1a202c;transform:scaleX(1.0063);">dbt Copilot</div><svg class="b" style="left:772.8px;top:711px;" width="11" height="8" viewBox="0 0 11 8" fill="none"><path d="M1 1.5l4.3 4.3 4.3-4.3" stroke="#1a202c" stroke-width="1.1"/></svg><div class="b" style="left:809.5px;top:692px;width:1px;height:47px;background:#e2e5ea;"></div><div class="t" style="left:842.55px;top:709.35px;font-size:13.4px;color:#2d3748;transform:scaleX(0.9510);">Results</div><div class="t" style="left:917.80px;top:709.35px;font-size:13.4px;color:#2d3748;transform:scaleX(0.9780);">Code quality</div><div class="t" style="left:1023.70px;top:709.35px;font-size:13.4px;color:#2d3748;transform:scaleX(0.9823);">Compiled code</div><div class="t" style="left:1142.73px;top:709.35px;font-size:13.4px;color:#2d3748;transform:scaleX(0.9716);">Lineage</div><div class="b" style="left:1126.9px;top:736.6px;width:78.2px;height:2.5px;background:#6b7789;border-radius:1px;"></div><div class="b" style="left:268px;top:740px;width:1091px;height:248px;background:#f7f8fa;overflow:hidden;"><svg width="1091" height="248" style="position:absolute;left:0;top:0"><defs><pattern id="dots" x="4.34" y="6.00" width="9.139" height="9.14" patternUnits="userSpaceOnUse"><circle cx="0.5" cy="0.5" r="0.6" fill="#b9bec6"/></pattern></defs><rect width="1091" height="248" fill="url(#dots)"/></svg></div><div class="b" style="left:268px;top:740px;width:1091px;height:248px;overflow:hidden;"><div class="b" style="left:-268px;top:-740px;width:1359px;height:988px;"><svg width="1359" height="988" style="position:absolute;left:0;top:0"><path d="M313.6 938.1C382.2 938.1 382.2 938.1 450.2 938.1" stroke="#9aa0a8" stroke-width="1" fill="none" opacity="0.25"/><path d="M447.4 935.5L450.5 938.1L447.4 940.7" stroke="#9aa0a8" stroke-width="1.1" fill="none" opacity="0.25" stroke-linejoin="miter"/><path d="M324.7 866.8C387.5 866.8 387.5 882.3 449.8 882.3" stroke="#5d6168" stroke-width="1" fill="none" opacity="1"/><path d="M447.0 879.7L450.1 882.3L447.0 884.9" stroke="#5d6168" stroke-width="1.1" fill="none" opacity="1" stroke-linejoin="miter"/><path d="M313.6 938.1C382.0 938.1 382.0 882.3 449.8 882.3" stroke="#5d6168" stroke-width="1" fill="none" opacity="1"/><path d="M447.0 879.7L450.1 882.3L447.0 884.9" stroke="#5d6168" stroke-width="1.1" fill="none" opacity="1" stroke-linejoin="miter"/><path d="M535.7 882.3C585.0 882.3 585.0 882.4 633.6 882.4" stroke="#5d6168" stroke-width="1" fill="none" opacity="1"/><path d="M630.8 879.8L633.9 882.4L630.8 885.0" stroke="#5d6168" stroke-width="1.1" fill="none" opacity="1" stroke-linejoin="miter"/><path d="M715.8 882.4C751.6 882.4 751.6 846.9 786.8 846.9" stroke="#5d6168" stroke-width="1" fill="none" opacity="1"/><path d="M784.0 844.3L787.1 846.9L784.0 849.5" stroke="#5d6168" stroke-width="1.1" fill="none" opacity="1" stroke-linejoin="miter"/><path d="M715.8 882.4C751.6 882.4 751.6 902.7 786.8 902.7" stroke="#5d6168" stroke-width="1" fill="none" opacity="1"/><path d="M784.0 900.1L787.1 902.7L784.0 905.3" stroke="#5d6168" stroke-width="1.1" fill="none" opacity="1" stroke-linejoin="miter"/><path d="M715.8 882.4C924.7 882.4 924.7 892.5 1133.0 892.5" stroke="#5d6168" stroke-width="1" fill="none" opacity="1"/><path d="M1130.2 889.9L1133.3 892.5L1130.2 895.1" stroke="#5d6168" stroke-width="1.1" fill="none" opacity="1" stroke-linejoin="miter"/><path d="M908.6 846.9C933.5 846.9 933.5 920.3 957.9 920.3" stroke="#5d6168" stroke-width="1" fill="none" opacity="1"/><path d="M955.1 917.7L958.2 920.3L955.1 922.9" stroke="#5d6168" stroke-width="1.1" fill="none" opacity="1" stroke-linejoin="miter"/><path d="M908.6 846.9C1021.1 846.9 1021.1 892.5 1133.0 892.5" stroke="#5d6168" stroke-width="1" fill="none" opacity="1"/><path d="M1130.2 889.9L1133.3 892.5L1130.2 895.1" stroke="#5d6168" stroke-width="1.1" fill="none" opacity="1" stroke-linejoin="miter"/><path d="M909.5 902.7C934.0 902.7 934.0 920.3 957.9 920.3" stroke="#5d6168" stroke-width="1" fill="none" opacity="1"/><path d="M955.1 917.7L958.2 920.3L955.1 922.9" stroke="#5d6168" stroke-width="1.1" fill="none" opacity="1" stroke-linejoin="miter"/><path d="M909.5 902.7C1021.5 902.7 1021.5 892.5 1133.0 892.5" stroke="#5d6168" stroke-width="1" fill="none" opacity="1"/><path d="M1130.2 889.9L1133.3 892.5L1130.2 895.1" stroke="#5d6168" stroke-width="1.1" fill="none" opacity="1" stroke-linejoin="miter"/><path d="M1076.5 920.3C1105.0 920.3 1105.0 892.5 1133.0 892.5" stroke="#5d6168" stroke-width="1" fill="none" opacity="1"/><path d="M1130.2 889.9L1133.3 892.5L1130.2 895.1" stroke="#5d6168" stroke-width="1.1" fill="none" opacity="1" stroke-linejoin="miter"/></svg><div class="b" style="left:200px;top:844.2px;width:124.69999999999999px;height:42.79999999999993px;background:#fff;border:1px solid #9ea3ab;border-radius:3px;box-sizing:border-box;"></div><div class="t" style="left:265.78px;top:862.86px;font-size:8.2px;color:#1a202c;-webkit-text-stroke:0.15px #1a202c;transform:scaleX(0.9300);">stg_customers</div><div class="b" style="left:200px;top:915.5px;width:113.60000000000002px;height:42.899999999999956px;background:#fff;border:1px solid #9ea3ab;border-radius:3px;box-sizing:border-box;"></div><div class="t" style="left:266.00px;top:934.06px;font-size:8.2px;color:#1a202c;-webkit-text-stroke:0.15px #1a202c;transform:scaleX(0.9300);">orders</div><div class="b" style="left:200px;top:971.5px;width:188.3px;height:40px;border:1px solid #e6e8eb;border-radius:4px;box-sizing:border-box;background:rgba(255,255,255,0.3);"></div><div class="b" style="left:450.5px;top:859px;width:85.39999999999998px;height:44.200000000000024px;background:#fff;border:1px solid #9ea3ab;border-radius:3px;box-sizing:border-box;border:1.5px solid #1f2937;border-radius:3px;box-shadow:0 12px 22px rgba(0,0,0,0.17);"></div><svg class="b" style="left:459.5px;top:871px;opacity:1;" width="20.3" height="20" viewBox="0 0 20.3 20" fill="none"><rect width="20.3" height="20" rx="2.5" fill="#a9dcf6"/><path d="M10.2 3.2l3.2 1.7v3.5l-3.2 1.7-3.2-1.7V4.9z M7 4.9l3.2 1.7 3.2-1.7M10.2 6.6v3.5" stroke="#1a202c" stroke-width="0.9" fill="none" stroke-linejoin="round"/><text x="4.6" y="17.1" font-family="Liberation Mono" font-size="7.6" textLength="11" lengthAdjust="spacingAndGlyphs" fill="#1a202c" stroke="#1a202c" stroke-width="0.12">MDL</text></svg><div class="t" style="left:487.80px;top:878.16px;font-size:8.2px;color:#1a202c;-webkit-text-stroke:0.15px #1a202c;transform:scaleX(0.9371);">customers</div><div class="b" style="left:450.8px;top:915.5px;width:182.6px;height:41.9px;border:1px solid #e4e6ea;border-radius:4px;box-sizing:border-box;background:rgba(255,255,255,0.25);"></div><svg class="b" style="left:459.5px;top:928px;opacity:0.3;" width="20.3" height="20" viewBox="0 0 20.3 20" fill="none"><rect width="20.3" height="20" rx="2.5" fill="#bfeed2"/><rect x="7.6" y="3.6" width="5.2" height="6" rx="0.8" stroke="#1a202c" stroke-width="0.7" fill="none"/><path d="M9 3.6v-0.8h2.4v0.8M8.8 6.6l1 1 1.8-1.8" stroke="#1a202c" stroke-width="0.7" fill="none"/><text x="4.6" y="17.1" font-family="Liberation Mono" font-size="7.6" textLength="11" lengthAdjust="spacingAndGlyphs" fill="#1a202c" stroke="#1a202c" stroke-width="0.12">TST</text></svg><div class="t" style="left:486.50px;top:934.66px;font-size:8.2px;color:#1a202c;-webkit-text-stroke:0.15px #1a202c;transform:scaleX(0.9677);opacity:0.15;">test_order_items_compute_to_bools...</div><div class="b" style="left:634.2px;top:859.6px;width:81.59999999999991px;height:43.200000000000024px;background:#fff;border:1px solid #9ea3ab;border-radius:3px;box-sizing:border-box;"></div><svg class="b" style="left:642.4px;top:870.8px;opacity:1;" width="20.3" height="20" viewBox="0 0 20.3 20" fill="none"><rect width="20.3" height="20" rx="2.5" fill="#f98d9c"/><circle cx="8.6" cy="4.4" r="1.2" stroke="#1a202c" stroke-width="0.7" fill="none"/><circle cx="8.6" cy="9" r="1.2" stroke="#1a202c" stroke-width="0.7" fill="none"/><circle cx="12.4" cy="6.4" r="1.1" stroke="#1a202c" stroke-width="0.7" fill="none"/><path d="M8.6 5.6v2.2M9.6 5l1.8 1.2" stroke="#1a202c" stroke-width="0.7"/><text x="4.6" y="17.1" font-family="Liberation Mono" font-size="7.6" textLength="11" lengthAdjust="spacingAndGlyphs" fill="#1a202c" stroke="#1a202c" stroke-width="0.12">SEM</text></svg><div class="t" style="left:670.90px;top:878.16px;font-size:8.2px;color:#1a202c;-webkit-text-stroke:0.15px #1a202c;transform:scaleX(0.9344);">customers</div><div class="b" style="left:787.4px;top:824.4px;width:121.20000000000005px;height:42.6px;background:#fff;border:1px solid #9ea3ab;border-radius:3px;box-sizing:border-box;"></div><svg class="b" style="left:795.9px;top:835.1px;opacity:1;" width="20.3" height="20" viewBox="0 0 20.3 20" fill="none"><rect width="20.3" height="20" rx="2.5" fill="#fde08a"/><path d="M6.3 3v7.3h7.6" stroke="#1a202c" stroke-width="0.8" fill="none"/><rect x="7.9" y="6.4" width="1.4" height="3.6" stroke="#1a202c" stroke-width="0.7" fill="none"/><rect x="10.2" y="3.6" width="1.4" height="6.4" stroke="#1a202c" stroke-width="0.7" fill="none"/><rect x="12.3" y="5" width="1.2" height="5" stroke="#1a202c" stroke-width="0.7" fill="none"/><text x="4.6" y="17.1" font-family="Liberation Mono" font-size="7.6" textLength="11" lengthAdjust="spacingAndGlyphs" fill="#1a202c" stroke="#1a202c" stroke-width="0.12">MET</text></svg><div class="t" style="left:824.00px;top:842.46px;font-size:8.2px;color:#1a202c;-webkit-text-stroke:0.15px #1a202c;transform:scaleX(0.9618);">count_lifetime_orders</div><div class="b" style="left:787.4px;top:880.2px;width:122.10000000000002px;height:42.49999999999998px;background:#fff;border:1px solid #9ea3ab;border-radius:3px;box-sizing:border-box;"></div><svg class="b" style="left:795.9px;top:891.3px;opacity:1;" width="20.3" height="20" viewBox="0 0 20.3 20" fill="none"><rect width="20.3" height="20" rx="2.5" fill="#fde08a"/><path d="M6.3 3v7.3h7.6" stroke="#1a202c" stroke-width="0.8" fill="none"/><rect x="7.9" y="6.4" width="1.4" height="3.6" stroke="#1a202c" stroke-width="0.7" fill="none"/><rect x="10.2" y="3.6" width="1.4" height="6.4" stroke="#1a202c" stroke-width="0.7" fill="none"/><rect x="12.3" y="5" width="1.2" height="5" stroke="#1a202c" stroke-width="0.7" fill="none"/><text x="4.6" y="17.1" font-family="Liberation Mono" font-size="7.6" textLength="11" lengthAdjust="spacingAndGlyphs" fill="#1a202c" stroke="#1a202c" stroke-width="0.12">MET</text></svg><div class="t" style="left:824.00px;top:898.46px;font-size:8.2px;color:#1a202c;-webkit-text-stroke:0.15px #1a202c;transform:scaleX(0.9549);">lifetime_spend_pretax</div><div class="b" style="left:958.5px;top:897.5px;width:118.0px;height:43.200000000000024px;background:#fff;border:1px solid #9ea3ab;border-radius:3px;box-sizing:border-box;"></div><svg class="b" style="left:966.9px;top:908.9px;opacity:1;" width="20.3" height="20" viewBox="0 0 20.3 20" fill="none"><rect width="20.3" height="20" rx="2.5" fill="#fde08a"/><path d="M6.3 3v7.3h7.6" stroke="#1a202c" stroke-width="0.8" fill="none"/><rect x="7.9" y="6.4" width="1.4" height="3.6" stroke="#1a202c" stroke-width="0.7" fill="none"/><rect x="10.2" y="3.6" width="1.4" height="6.4" stroke="#1a202c" stroke-width="0.7" fill="none"/><rect x="12.3" y="5" width="1.2" height="5" stroke="#1a202c" stroke-width="0.7" fill="none"/><text x="4.6" y="17.1" font-family="Liberation Mono" font-size="7.6" textLength="11" lengthAdjust="spacingAndGlyphs" fill="#1a202c" stroke="#1a202c" stroke-width="0.12">MET</text></svg><div class="t" style="left:995.60px;top:916.16px;font-size:8.2px;color:#1a202c;-webkit-text-stroke:0.15px #1a202c;transform:scaleX(0.9213);">average_order_value</div><div class="b" style="left:1133.6px;top:869.9px;width:130.5px;height:42.90000000000007px;background:#fff;border:1px solid #9ea3ab;border-radius:3px;box-sizing:border-box;"></div><svg class="b" style="left:1142px;top:880.7px;opacity:1;" width="20.3" height="20" viewBox="0 0 20.3 20" fill="none"><rect width="20.3" height="20" rx="2.5" fill="#d6d3d1"/><rect x="7.4" y="3" width="5.6" height="6.8" rx="1.3" stroke="#1a202c" stroke-width="0.8" fill="none"/><path d="M9.2 8.4V4.6h1.4a1 1 0 0 1 0 2H9.2l2 1.8" stroke="#1a202c" stroke-width="0.7" fill="none"/><text x="4.6" y="17.1" font-family="Liberation Mono" font-size="7.6" textLength="11" lengthAdjust="spacingAndGlyphs" fill="#1a202c" stroke="#1a202c" stroke-width="0.12">QRY</text></svg><div class="t" style="left:1170.40px;top:888.16px;font-size:8.2px;color:#1a202c;-webkit-text-stroke:0.15px #1a202c;transform:scaleX(0.9549);">customer_order_metrics</div></div></div><div class="b" style="left:934.2px;top:764.2px;width:296.5px;height:39.5px;background:#fff;border:1px solid #5f6875;border-radius:6px;box-sizing:border-box;overflow:hidden;"><div class="b" style="left:192px;top:0;width:104px;height:38px;background:#eef0f4;border-left:1px solid #5f6875;"></div></div><div class="t" style="left:946.60px;top:778.15px;font-size:13.4px;color:#1a202c;transform:scaleX(0.9657);">2+customers+2</div><div class="t" style="left:1137.23px;top:778.15px;font-size:13.4px;color:#1a202c;transform:scaleX(0.9701);">Update Graph</div><div class="b" style="left:1247.3px;top:764.2px;width:39.7px;height:39.5px;border:1px solid #5f6875;border-radius:6px;box-sizing:border-box;background:#fff;"></div><svg class="b" style="left:1257px;top:775px;" width="20" height="18" viewBox="0 0 20 18" fill="none"><path d="M2.7 6.8V1.7H7.9M12 1.7H17.2V6.8M17.2 11.2V16.3H12M7.9 16.3H2.7V11.2" stroke="#1a202c" stroke-width="1.2"/></svg><div class="b" style="left:1295.4px;top:764.2px;width:39.5px;height:39.5px;border:1px solid #5f6875;border-radius:6px;box-sizing:border-box;background:#fff;"></div><svg class="b" style="left:1306px;top:775px;" width="18" height="18" viewBox="0 0 18 18" fill="none"><path d="M15.4 10.3A6.6 6.6 0 1 1 8.8 3.6H14.8" stroke="#1a202c" stroke-width="1.2"/><path d="M12.6 1.2L15.1 3.6 12.6 6" stroke="#1a202c" stroke-width="1.2" stroke-linejoin="round"/></svg><div class="b" style="left:0px;top:986.5px;width:1359px;height:4.5px;background:linear-gradient(rgba(247,248,250,0),#d2d5d9);"></div>
</div></body></html>
